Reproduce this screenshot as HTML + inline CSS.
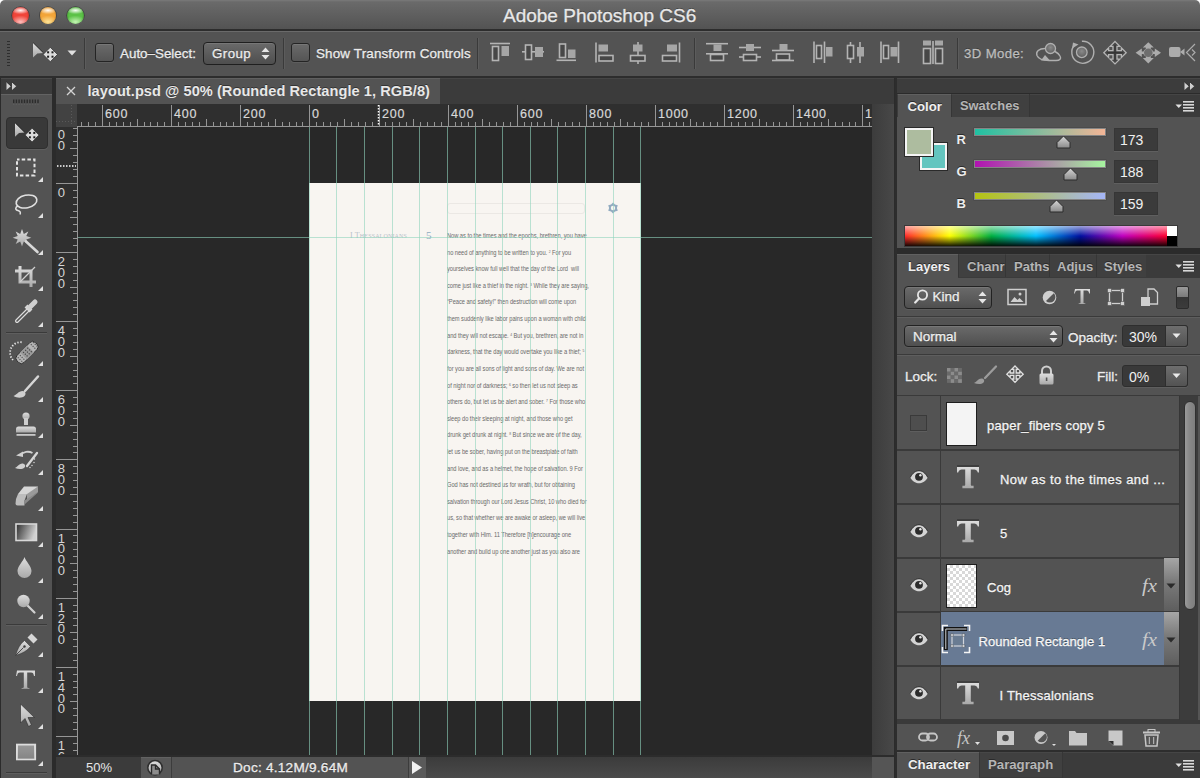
<!DOCTYPE html><html><head><meta charset="utf-8"><title>Photoshop</title><style>
*{margin:0;padding:0;box-sizing:border-box}
html,body{width:1200px;height:778px;overflow:hidden;background:#2b2b2b;font-family:"Liberation Sans",sans-serif}
.a{position:absolute}
.t{white-space:nowrap;line-height:1}
.s{-webkit-text-stroke:0.3px currentColor}
</style></head><body>
<div class="a" style="left:0px;top:0px;width:6px;height:6px;background:#fff"></div>
<div class="a" style="left:1194px;top:0px;width:6px;height:6px;background:#fff"></div>
<div class="a" style="left:0px;top:0px;width:1200px;height:29px;background:linear-gradient(#7a7a7a 0,#6a6a6a 2px,#535353 100%);border-radius:5px 5px 0 0"></div>
<div class="a" style="left:0px;top:29px;width:1200px;height:2px;background:#2d2d2d"></div>
<div class="a" style="left:11.9px;top:7.3px;width:16.8px;height:16.8px;border-radius:50%;background:radial-gradient(ellipse 55% 22% at 50% 20%,rgba(255,255,255,.95),rgba(255,255,255,0)),radial-gradient(ellipse 60% 38% at 50% 88%,rgba(255,215,215,.85),rgba(255,255,255,0)),radial-gradient(circle at 50% 50%,#f0453a 0%,#f0453a 55%,#8e1010 100%);box-shadow:0 0 0 0.7px rgba(30,30,30,.5),0 1px 0 rgba(255,255,255,.25)"></div>
<div class="a" style="left:39.5px;top:7.3px;width:16.8px;height:16.8px;border-radius:50%;background:radial-gradient(ellipse 55% 22% at 50% 20%,rgba(255,255,255,.95),rgba(255,255,255,0)),radial-gradient(ellipse 60% 38% at 50% 88%,rgba(255,240,170,.85),rgba(255,255,255,0)),radial-gradient(circle at 50% 50%,#f2a53a 0%,#f2a53a 55%,#9a5a05 100%);box-shadow:0 0 0 0.7px rgba(30,30,30,.5),0 1px 0 rgba(255,255,255,.25)"></div>
<div class="a" style="left:67.0px;top:7.3px;width:16.8px;height:16.8px;border-radius:50%;background:radial-gradient(ellipse 55% 22% at 50% 20%,rgba(255,255,255,.95),rgba(255,255,255,0)),radial-gradient(ellipse 60% 38% at 50% 88%,rgba(215,255,200,.85),rgba(255,255,255,0)),radial-gradient(circle at 50% 50%,#5cc248 0%,#5cc248 55%,#1e6a10 100%);box-shadow:0 0 0 0.7px rgba(30,30,30,.5),0 1px 0 rgba(255,255,255,.25)"></div>
<div class="a t s" style="left:503px;top:6px;font-size:19px;color:#e8e8e8;text-shadow:0 -1px 0 #3a3a3a;-webkit-text-stroke:0.3px #e8e8e8">Adobe Photoshop CS6</div>
<div class="a" style="left:0px;top:31px;width:1200px;height:45px;background:#535353;border-top:1px solid #6a6a6a"></div>
<div class="a" style="left:0px;top:76px;width:1200px;height:2px;background:#2d2d2d"></div>
<div class="a" style="left:7px;top:41px;width:3px;height:26px;background:repeating-linear-gradient(#2e2e2e 0 1px,transparent 1px 3px)"></div>
<svg class="a" style="left:30px;top:40px;" width="30" height="26" viewBox="0 0 30 26"><path d="M3 2.5 L3 17.5 L7.3 13.6 L13.5 12.9Z" fill="url(#tg)"/><path d="M3 2.5 L13.5 12.9" stroke="#1e1e1e" stroke-width="0.9"/><path d="M20.3 7.3 L27.5 14.5 L20.3 21.7 L13.100000000000001 14.5Z" fill="#dcdcdc" stroke="#2a2a2a" stroke-width="0.7"/><rect x="17.1" y="11.3" width="2" height="2" fill="#1e1e1e"/><rect x="17.1" y="15.7" width="2" height="2" fill="#1e1e1e"/><rect x="21.5" y="11.3" width="2" height="2" fill="#1e1e1e"/><rect x="21.5" y="15.7" width="2" height="2" fill="#1e1e1e"/></svg>
<svg class="a" style="left:67px;top:50px;" width="10" height="6" viewBox="0 0 10 6"><path d="M0.5 0.5 H9.5 L5 5.5 Z" fill="#e0e0e0"/></svg>
<div class="a" style="left:84px;top:38px;width:1px;height:31px;background:#3a3a3a;box-shadow:1px 0 0 #5c5c5c"></div>
<div class="a" style="left:283px;top:38px;width:1px;height:31px;background:#3a3a3a;box-shadow:1px 0 0 #5c5c5c"></div>
<div class="a" style="left:477px;top:38px;width:1px;height:31px;background:#3a3a3a;box-shadow:1px 0 0 #5c5c5c"></div>
<div class="a" style="left:694px;top:38px;width:1px;height:31px;background:#3a3a3a;box-shadow:1px 0 0 #5c5c5c"></div>
<div class="a" style="left:957px;top:38px;width:1px;height:31px;background:#3a3a3a;box-shadow:1px 0 0 #5c5c5c"></div>
<div class="a" style="left:95px;top:43px;width:19px;height:19px;border:1px solid #242424;border-radius:3px;background:linear-gradient(#6a6a6a,#555);box-shadow:inset 0 1px 0 #777, 0 1px 0 #5e5e5e"></div>
<div class="a t s" style="left:120px;top:47px;font-size:13.4px;letter-spacing:0px;color:#ececec;text-shadow:0 -1px 0 #333">Auto&ndash;Select:</div>
<div class="a" style="left:203px;top:42px;width:73px;height:23px;border:1px solid #1f1f1f;border-radius:4px;background:linear-gradient(#6a6a6a,#4e4e4e);box-shadow:inset 0 1px 0 #777"></div>
<div class="a t s" style="left:212px;top:47px;font-size:13.3px;letter-spacing:0.45px;color:#ececec;text-shadow:0 -1px 0 #333">Group</div>
<svg class="a" style="left:261px;top:47px;" width="9" height="13" viewBox="0 0 9 13"><path d="M0.5 5 L4.5 0.5 L8.5 5 Z M0.5 8 L4.5 12.5 L8.5 8 Z" fill="#e6e6e6"/></svg>
<div class="a" style="left:291px;top:43px;width:19px;height:19px;border:1px solid #242424;border-radius:3px;background:linear-gradient(#6a6a6a,#555);box-shadow:inset 0 1px 0 #777, 0 1px 0 #5e5e5e"></div>
<div class="a t s" style="left:316px;top:47px;font-size:13.45px;letter-spacing:0.14px;color:#ececec;text-shadow:0 -1px 0 #333">Show Transform Controls</div>
<svg class="a" style="left:0px;top:0px;" width="1200" height="80" viewBox="0 0 1200 80"><line x1="490" y1="43.5" x2="510" y2="43.5" stroke="#b4b4b4" stroke-width="1.6"/><rect x="492.5" y="46.5" width="6" height="14" fill="#474747" stroke="#b4b4b4" stroke-width="1.6"/><rect x="501.5" y="46" width="7.5" height="10" fill="#a6a6a6"/><line x1="522" y1="51.8" x2="544" y2="51.8" stroke="#b4b4b4" stroke-width="1.6"/><rect x="525.5" y="45.0" width="6" height="14.5" fill="#474747" stroke="#b4b4b4" stroke-width="1.6"/><rect x="535" y="47" width="8" height="10" fill="#a6a6a6"/><line x1="556.5" y1="60.3" x2="576" y2="60.3" stroke="#b4b4b4" stroke-width="1.6"/><rect x="559.5" y="44.0" width="6" height="13.5" fill="#474747" stroke="#b4b4b4" stroke-width="1.6"/><rect x="568" y="49.5" width="7.5" height="8.5" fill="#a6a6a6"/><line x1="596" y1="42.5" x2="596" y2="62.5" stroke="#b4b4b4" stroke-width="1.6"/><rect x="598.5" y="44.5" width="9.5" height="7" fill="#a6a6a6"/><rect x="599.0" y="55.5" width="14" height="5.5" fill="#474747" stroke="#b4b4b4" stroke-width="1.6"/><line x1="638" y1="42" x2="638" y2="64" stroke="#b4b4b4" stroke-width="1.6"/><rect x="633" y="44.5" width="9.5" height="7" fill="#a6a6a6"/><rect x="630.5" y="55.5" width="14.5" height="5.5" fill="#474747" stroke="#b4b4b4" stroke-width="1.6"/><line x1="679.5" y1="42.5" x2="679.5" y2="62.5" stroke="#b4b4b4" stroke-width="1.6"/><rect x="667" y="44.5" width="10" height="7" fill="#a6a6a6"/><rect x="662.5" y="55.5" width="14" height="5.5" fill="#474747" stroke="#b4b4b4" stroke-width="1.6"/><line x1="706" y1="43.7" x2="728" y2="43.7" stroke="#b4b4b4" stroke-width="1.6"/><rect x="713.5" y="44.5" width="8" height="6.5" fill="#a6a6a6"/><line x1="706" y1="53.8" x2="728" y2="53.8" stroke="#b4b4b4" stroke-width="1.6"/><rect x="710.5" y="54.5" width="13" height="6" fill="#474747" stroke="#b4b4b4" stroke-width="1.6"/><line x1="739" y1="47.5" x2="761" y2="47.5" stroke="#b4b4b4" stroke-width="1.6"/><rect x="746" y="44" width="8" height="7" fill="#a6a6a6"/><line x1="739" y1="57" x2="761" y2="57" stroke="#b4b4b4" stroke-width="1.6"/><rect x="743.5" y="54.5" width="13" height="6" fill="#474747" stroke="#b4b4b4" stroke-width="1.6"/><line x1="772" y1="50.5" x2="794" y2="50.5" stroke="#b4b4b4" stroke-width="1.6"/><rect x="779.5" y="44" width="8" height="6.5" fill="#a6a6a6"/><line x1="772" y1="60.5" x2="794" y2="60.5" stroke="#b4b4b4" stroke-width="1.6"/><rect x="776.5" y="54.0" width="13" height="6" fill="#474747" stroke="#b4b4b4" stroke-width="1.6"/><line x1="814" y1="41.5" x2="814" y2="63" stroke="#b4b4b4" stroke-width="1.6"/><rect x="816.5" y="45.5" width="5" height="13" fill="#474747" stroke="#b4b4b4" stroke-width="1.6"/><line x1="824.5" y1="41.5" x2="824.5" y2="63" stroke="#b4b4b4" stroke-width="1.6"/><rect x="826" y="47" width="6.5" height="9.5" fill="#a6a6a6"/><line x1="850.5" y1="42" x2="850.5" y2="63" stroke="#b4b4b4" stroke-width="1.6"/><rect x="847.5" y="45.5" width="6" height="13" fill="#474747" stroke="#b4b4b4" stroke-width="1.6"/><line x1="860" y1="42" x2="860" y2="63" stroke="#b4b4b4" stroke-width="1.6"/><rect x="857" y="47" width="7" height="9.5" fill="#a6a6a6"/><line x1="881" y1="41.5" x2="881" y2="63" stroke="#b4b4b4" stroke-width="1.6"/><rect x="883.5" y="45.5" width="5" height="13" fill="#474747" stroke="#b4b4b4" stroke-width="1.6"/><line x1="898.5" y1="41.5" x2="898.5" y2="63" stroke="#b4b4b4" stroke-width="1.6"/><rect x="890.5" y="47" width="7" height="9.5" fill="#a6a6a6"/><rect x="923" y="40.5" width="8" height="5" fill="#a6a6a6"/><rect x="923.5" y="48.5" width="7" height="15" fill="#474747" stroke="#b4b4b4" stroke-width="1.6"/><line x1="933" y1="41" x2="933" y2="64" stroke="#b4b4b4" stroke-width="1.6"/><rect x="935" y="40.5" width="8" height="5" fill="#a6a6a6"/><rect x="935.5" y="48.5" width="7" height="15" fill="#474747" stroke="#b4b4b4" stroke-width="1.6"/></svg>
<div class="a t s" style="left:964px;top:47px;font-size:13.15px;letter-spacing:0.4px;color:#bdbdbd;text-shadow:0 -1px 0 #333">3D Mode:</div>
<svg class="a" style="left:0px;top:0px;" width="1200" height="80" viewBox="0 0 1200 80"><defs><radialGradient id="sg" cx="0.5" cy="0.4" r="0.6"><stop offset="0" stop-color="#8a8a8a"/><stop offset="1" stop-color="#5e5e5e"/></radialGradient></defs><path d="M1045 48.5 c-6 0 -9.5 3 -8 7 c1.5 3.5 7 5 12 5 h7 c4 0 5.5 -2 4 -4.5 c-1 -2 -3 -3.5 -5 -4.5" fill="none" stroke="#b0b0b0" stroke-width="1.4"/><circle cx="1050.5" cy="48.5" r="5" fill="url(#sg)" stroke="#b0b0b0" stroke-width="1.3"/><path d="M1041 60.5 l4 -5.5 l5 5.5z" fill="#b0b0b0"/><path d="M1075 44.5 a11 11 0 1 0 6.9 -3.2" fill="none" stroke="#b0b0b0" stroke-width="1.4"/><path d="M1072 48.5 l1 -6 l5.5 2z" fill="#b0b0b0"/><circle cx="1081.8" cy="52.3" r="5.3" fill="url(#sg)" stroke="#b0b0b0" stroke-width="1.3"/><path d="M1115 41.5 l4.8 4.8 h-2.8 v4.4 h4.4 v-2.8 l4.8 4.8 -4.8 4.8 v-2.8 h-4.4 v4.4 h2.8 l-4.8 4.8 -4.8 -4.8 h2.8 v-4.4 h-4.4 v2.8 l-4.8 -4.8 4.8 -4.8 v2.8 h4.4 v-4.4 h-2.8z" fill="#474747" stroke="#b4b4b4" stroke-width="1.3"/><path d="M1115 45 v15.5 M1107.3 52.7 h15.5" stroke="#333" stroke-width="1"/><path d="M1148.3 42.3 l5.5 5.2 h-3 v1.6 a4.5 4.5 0 0 1 2.4 2.4 h1.6 v-3 l6.2 4.2 -6.2 4.2 v-3 h-1.6 a4.5 4.5 0 0 1 -2.4 2.4 v1.6 h3 l-5.5 5.5 -5.5 -5.5 h3 v-1.6 a4.5 4.5 0 0 1 -2.4 -2.4 h-1.6 v3 l-6.2 -4.2 6.2 -4.2 v3 h1.6 a4.5 4.5 0 0 1 2.4 -2.4 v-1.6 h-3z" fill="#acacac"/><circle cx="1148.3" cy="52.7" r="4.3" fill="#6e6e6e"/><rect x="1169" y="47" width="11.5" height="10" rx="2" fill="#acacac"/><path d="M1180 52 l4.5 -3.5 v7z" fill="#acacac"/><path d="M1195 44 l-8.5 8.5 8.5 8.5 M1192 49.5 l3 3 -3 3" fill="none" stroke="#acacac" stroke-width="1.2"/></svg>
<div class="a" style="left:1px;top:78px;width:51px;height:15.5px;background:#3c3c3c;border-top:1px solid #4a4a4a"></div>
<svg class="a" style="left:5.5px;top:80.5px;" width="12" height="10" viewBox="0 0 12 10"><path d="M0.5 1 L5 5 L0.5 9Z M6 1 L10.5 5 L6 9Z" fill="#cfcfcf"/><path d="M0.5 1 L5 5 M6 1 L10.5 5" stroke="#1e1e1e" stroke-width="0.8"/></svg>
<div class="a" style="left:1px;top:94px;width:51px;height:684px;background:#535353;border-top:1px solid #636363"></div>
<svg class="a" style="left:12px;top:98px;" width="30" height="8" viewBox="0 0 30 8"><rect x="1.0" y="1.5" width="1.4" height="4" fill="#2c2c2c"/><rect x="1.0" y="5.5" width="1.4" height="1" fill="#666"/><rect x="3.7" y="1.5" width="1.4" height="4" fill="#2c2c2c"/><rect x="3.7" y="5.5" width="1.4" height="1" fill="#666"/><rect x="6.4" y="1.5" width="1.4" height="4" fill="#2c2c2c"/><rect x="6.4" y="5.5" width="1.4" height="1" fill="#666"/><rect x="9.1" y="1.5" width="1.4" height="4" fill="#2c2c2c"/><rect x="9.1" y="5.5" width="1.4" height="1" fill="#666"/><rect x="11.8" y="1.5" width="1.4" height="4" fill="#2c2c2c"/><rect x="11.8" y="5.5" width="1.4" height="1" fill="#666"/><rect x="14.5" y="1.5" width="1.4" height="4" fill="#2c2c2c"/><rect x="14.5" y="5.5" width="1.4" height="1" fill="#666"/><rect x="17.2" y="1.5" width="1.4" height="4" fill="#2c2c2c"/><rect x="17.2" y="5.5" width="1.4" height="1" fill="#666"/><rect x="19.9" y="1.5" width="1.4" height="4" fill="#2c2c2c"/><rect x="19.9" y="5.5" width="1.4" height="1" fill="#666"/><rect x="22.6" y="1.5" width="1.4" height="4" fill="#2c2c2c"/><rect x="22.6" y="5.5" width="1.4" height="1" fill="#666"/><rect x="25.3" y="1.5" width="1.4" height="4" fill="#2c2c2c"/><rect x="25.3" y="5.5" width="1.4" height="1" fill="#666"/></svg>
<div class="a" style="left:6px;top:117px;width:42px;height:32px;background:#393939;border:1px solid #2f2f2f;border-radius:4px;box-shadow:0 1px 0 #5e5e5e"></div>
<div class="a" style="left:6px;top:332px;width:41px;height:1px;background:#3a3a3a;box-shadow:0 1px 0 #5e5e5e"></div>
<div class="a" style="left:6px;top:624px;width:41px;height:1px;background:#3a3a3a;box-shadow:0 1px 0 #5e5e5e"></div>
<div class="a" style="left:6px;top:772px;width:41px;height:1px;background:#3a3a3a;box-shadow:0 1px 0 #5e5e5e"></div>
<div class="a" style="left:56px;top:78px;width:838px;height:26px;background:#3b3b3b;border-top:1px solid #454545"></div>
<div class="a" style="left:56px;top:78px;width:384px;height:26px;background:#535353;border-top:1px solid #606060"></div>
<svg class="a" style="left:66px;top:86px;" width="10" height="10" viewBox="0 0 10 10"><path d="M1 1 L9 9 M9 1 L1 9" stroke="#d4d4d4" stroke-width="1.3"/></svg>
<div class="a t" style="left:87.5px;top:84px;font-size:14.6px;font-weight:bold;letter-spacing:0.05px;color:#e8e8e8;text-shadow:0 -1px 0 #333">layout.psd @ 50% (Rounded Rectangle 1, RGB/8)</div>
<div class="a" style="left:56px;top:104px;width:21px;height:23px;background:#424242"></div>
<div class="a" style="left:77px;top:104px;width:795px;height:23px;background:#2f2f2f"></div>
<div class="a" style="left:56px;top:127px;width:22px;height:628px;background:#2f2f2f"></div>
<div class="a" style="left:78px;top:127px;width:794px;height:628px;background:#282828"></div>
<div class="a" style="left:872px;top:104px;width:22px;height:651px;background:linear-gradient(90deg,#3c3c3c,#484848)"></div>
<div class="a" style="left:56px;top:755px;width:838px;height:23px;background:linear-gradient(#3a3a3a,#4a4a4a)"></div>
<div class="a" style="left:56px;top:755px;width:838px;height:2px;background:#2c2c2c"></div>
<div class="a" style="left:56px;top:757px;width:85px;height:21px;background:#3b3b3b"></div>
<div class="a" style="left:141px;top:757px;width:30px;height:21px;background:#575757;border-top:1px solid #626262"></div>
<div class="a" style="left:171px;top:757px;width:237px;height:21px;background:#535353;border-left:1px solid #3c3c3c"></div>
<div class="a t" style="left:86px;top:761px;font-size:13px;color:#e8e8e8">50%</div>
<div class="a t s" style="left:233px;top:761px;font-size:13.6px;letter-spacing:0.25px;color:#ececec;text-shadow:0 -1px 0 #333">Doc: 4.12M/9.64M</div>
<div class="a" style="left:408px;top:757px;width:18px;height:21px;background:#5a5a5a;border-left:1px solid #3c3c3c"></div>
<svg class="a" style="left:411px;top:760px;" width="12" height="15" viewBox="0 0 12 15"><path d="M1 1 L11 7.5 L1 14Z" fill="#f0f0f0"/></svg>
<div class="a" style="left:872px;top:757px;width:22px;height:21px;background:#555"></div>
<svg class="a" style="left:145px;top:757px;" width="22" height="21" viewBox="0 0 22 21"><circle cx="10" cy="10.7" r="7.2" fill="url(#tg)" stroke="#2e2e2e" stroke-width="1.5"/><path d="M6.5 17.5 v-9.5 h4 l4 4 v5.5" fill="#8c8c8c" stroke="#2a2a2a" stroke-width="1.4"/><path d="M10.5 8 v4 h4" fill="none" stroke="#2a2a2a" stroke-width="1.3"/></svg>
<div class="a" style="left:897px;top:78px;width:303px;height:15px;background:#3c3c3c;border-top:1px solid #474747"></div>
<svg class="a" style="left:1183.5px;top:80.5px;" width="12" height="10" viewBox="0 0 12 10"><path d="M0.5 1 L5 5 L0.5 9Z M6 1 L10.5 5 L6 9Z" fill="#cfcfcf"/><path d="M0.5 1 L5 5 M6 1 L10.5 5" stroke="#1e1e1e" stroke-width="0.8"/></svg>
<div class="a" style="left:897px;top:94px;width:303px;height:24px;background:#3b3b3b;border-top:1px solid #454545"></div>
<div class="a" style="left:897px;top:117px;width:303px;height:131px;background:#535353"></div>
<div class="a" style="left:897px;top:254px;width:303px;height:24px;background:#3b3b3b;border-top:1px solid #454545"></div>
<div class="a" style="left:897px;top:278px;width:303px;height:472px;background:#535353"></div>
<div class="a" style="left:897px;top:752px;width:303px;height:26px;background:#3b3b3b;border-top:1px solid #454545"></div>
<svg class="a" style="left:0px;top:0px;" width="900" height="778" viewBox="0 0 900 778"><line x1="81.5" y1="122" x2="81.5" y2="127" stroke="#969696" stroke-width="1"/><line x1="88.5" y1="122" x2="88.5" y2="127" stroke="#969696" stroke-width="1"/><line x1="95.5" y1="122" x2="95.5" y2="127" stroke="#969696" stroke-width="1"/><line x1="102.5" y1="105" x2="102.5" y2="127" stroke="#969696" stroke-width="1"/><line x1="109.5" y1="122" x2="109.5" y2="127" stroke="#969696" stroke-width="1"/><line x1="116.5" y1="122" x2="116.5" y2="127" stroke="#969696" stroke-width="1"/><line x1="123.5" y1="122" x2="123.5" y2="127" stroke="#969696" stroke-width="1"/><line x1="130.5" y1="122" x2="130.5" y2="127" stroke="#969696" stroke-width="1"/><line x1="137.5" y1="119" x2="137.5" y2="127" stroke="#969696" stroke-width="1"/><line x1="144.5" y1="122" x2="144.5" y2="127" stroke="#969696" stroke-width="1"/><line x1="150.5" y1="122" x2="150.5" y2="127" stroke="#969696" stroke-width="1"/><line x1="157.5" y1="122" x2="157.5" y2="127" stroke="#969696" stroke-width="1"/><line x1="164.5" y1="122" x2="164.5" y2="127" stroke="#969696" stroke-width="1"/><line x1="171.5" y1="105" x2="171.5" y2="127" stroke="#969696" stroke-width="1"/><line x1="178.5" y1="122" x2="178.5" y2="127" stroke="#969696" stroke-width="1"/><line x1="185.5" y1="122" x2="185.5" y2="127" stroke="#969696" stroke-width="1"/><line x1="192.5" y1="122" x2="192.5" y2="127" stroke="#969696" stroke-width="1"/><line x1="199.5" y1="122" x2="199.5" y2="127" stroke="#969696" stroke-width="1"/><line x1="206.5" y1="119" x2="206.5" y2="127" stroke="#969696" stroke-width="1"/><line x1="213.5" y1="122" x2="213.5" y2="127" stroke="#969696" stroke-width="1"/><line x1="220.5" y1="122" x2="220.5" y2="127" stroke="#969696" stroke-width="1"/><line x1="226.5" y1="122" x2="226.5" y2="127" stroke="#969696" stroke-width="1"/><line x1="233.5" y1="122" x2="233.5" y2="127" stroke="#969696" stroke-width="1"/><line x1="240.5" y1="105" x2="240.5" y2="127" stroke="#969696" stroke-width="1"/><line x1="247.5" y1="122" x2="247.5" y2="127" stroke="#969696" stroke-width="1"/><line x1="254.5" y1="122" x2="254.5" y2="127" stroke="#969696" stroke-width="1"/><line x1="261.5" y1="122" x2="261.5" y2="127" stroke="#969696" stroke-width="1"/><line x1="268.5" y1="122" x2="268.5" y2="127" stroke="#969696" stroke-width="1"/><line x1="275.5" y1="119" x2="275.5" y2="127" stroke="#969696" stroke-width="1"/><line x1="282.5" y1="122" x2="282.5" y2="127" stroke="#969696" stroke-width="1"/><line x1="289.5" y1="122" x2="289.5" y2="127" stroke="#969696" stroke-width="1"/><line x1="296.5" y1="122" x2="296.5" y2="127" stroke="#969696" stroke-width="1"/><line x1="302.5" y1="122" x2="302.5" y2="127" stroke="#969696" stroke-width="1"/><line x1="309.5" y1="105" x2="309.5" y2="127" stroke="#969696" stroke-width="1"/><line x1="316.5" y1="122" x2="316.5" y2="127" stroke="#969696" stroke-width="1"/><line x1="323.5" y1="122" x2="323.5" y2="127" stroke="#969696" stroke-width="1"/><line x1="330.5" y1="122" x2="330.5" y2="127" stroke="#969696" stroke-width="1"/><line x1="337.5" y1="122" x2="337.5" y2="127" stroke="#969696" stroke-width="1"/><line x1="344.5" y1="119" x2="344.5" y2="127" stroke="#969696" stroke-width="1"/><line x1="351.5" y1="122" x2="351.5" y2="127" stroke="#969696" stroke-width="1"/><line x1="358.5" y1="122" x2="358.5" y2="127" stroke="#969696" stroke-width="1"/><line x1="365.5" y1="122" x2="365.5" y2="127" stroke="#969696" stroke-width="1"/><line x1="372.5" y1="122" x2="372.5" y2="127" stroke="#969696" stroke-width="1"/><line x1="379.5" y1="105" x2="379.5" y2="127" stroke="#969696" stroke-width="1"/><line x1="385.5" y1="122" x2="385.5" y2="127" stroke="#969696" stroke-width="1"/><line x1="392.5" y1="122" x2="392.5" y2="127" stroke="#969696" stroke-width="1"/><line x1="399.5" y1="122" x2="399.5" y2="127" stroke="#969696" stroke-width="1"/><line x1="406.5" y1="122" x2="406.5" y2="127" stroke="#969696" stroke-width="1"/><line x1="413.5" y1="119" x2="413.5" y2="127" stroke="#969696" stroke-width="1"/><line x1="420.5" y1="122" x2="420.5" y2="127" stroke="#969696" stroke-width="1"/><line x1="427.5" y1="122" x2="427.5" y2="127" stroke="#969696" stroke-width="1"/><line x1="434.5" y1="122" x2="434.5" y2="127" stroke="#969696" stroke-width="1"/><line x1="441.5" y1="122" x2="441.5" y2="127" stroke="#969696" stroke-width="1"/><line x1="448.5" y1="105" x2="448.5" y2="127" stroke="#969696" stroke-width="1"/><line x1="455.5" y1="122" x2="455.5" y2="127" stroke="#969696" stroke-width="1"/><line x1="461.5" y1="122" x2="461.5" y2="127" stroke="#969696" stroke-width="1"/><line x1="468.5" y1="122" x2="468.5" y2="127" stroke="#969696" stroke-width="1"/><line x1="475.5" y1="122" x2="475.5" y2="127" stroke="#969696" stroke-width="1"/><line x1="482.5" y1="119" x2="482.5" y2="127" stroke="#969696" stroke-width="1"/><line x1="489.5" y1="122" x2="489.5" y2="127" stroke="#969696" stroke-width="1"/><line x1="496.5" y1="122" x2="496.5" y2="127" stroke="#969696" stroke-width="1"/><line x1="503.5" y1="122" x2="503.5" y2="127" stroke="#969696" stroke-width="1"/><line x1="510.5" y1="122" x2="510.5" y2="127" stroke="#969696" stroke-width="1"/><line x1="517.5" y1="105" x2="517.5" y2="127" stroke="#969696" stroke-width="1"/><line x1="524.5" y1="122" x2="524.5" y2="127" stroke="#969696" stroke-width="1"/><line x1="531.5" y1="122" x2="531.5" y2="127" stroke="#969696" stroke-width="1"/><line x1="537.5" y1="122" x2="537.5" y2="127" stroke="#969696" stroke-width="1"/><line x1="544.5" y1="122" x2="544.5" y2="127" stroke="#969696" stroke-width="1"/><line x1="551.5" y1="119" x2="551.5" y2="127" stroke="#969696" stroke-width="1"/><line x1="558.5" y1="122" x2="558.5" y2="127" stroke="#969696" stroke-width="1"/><line x1="565.5" y1="122" x2="565.5" y2="127" stroke="#969696" stroke-width="1"/><line x1="572.5" y1="122" x2="572.5" y2="127" stroke="#969696" stroke-width="1"/><line x1="579.5" y1="122" x2="579.5" y2="127" stroke="#969696" stroke-width="1"/><line x1="586.5" y1="105" x2="586.5" y2="127" stroke="#969696" stroke-width="1"/><line x1="593.5" y1="122" x2="593.5" y2="127" stroke="#969696" stroke-width="1"/><line x1="600.5" y1="122" x2="600.5" y2="127" stroke="#969696" stroke-width="1"/><line x1="607.5" y1="122" x2="607.5" y2="127" stroke="#969696" stroke-width="1"/><line x1="614.5" y1="122" x2="614.5" y2="127" stroke="#969696" stroke-width="1"/><line x1="620.5" y1="119" x2="620.5" y2="127" stroke="#969696" stroke-width="1"/><line x1="627.5" y1="122" x2="627.5" y2="127" stroke="#969696" stroke-width="1"/><line x1="634.5" y1="122" x2="634.5" y2="127" stroke="#969696" stroke-width="1"/><line x1="641.5" y1="122" x2="641.5" y2="127" stroke="#969696" stroke-width="1"/><line x1="648.5" y1="122" x2="648.5" y2="127" stroke="#969696" stroke-width="1"/><line x1="655.5" y1="105" x2="655.5" y2="127" stroke="#969696" stroke-width="1"/><line x1="662.5" y1="122" x2="662.5" y2="127" stroke="#969696" stroke-width="1"/><line x1="669.5" y1="122" x2="669.5" y2="127" stroke="#969696" stroke-width="1"/><line x1="676.5" y1="122" x2="676.5" y2="127" stroke="#969696" stroke-width="1"/><line x1="683.5" y1="122" x2="683.5" y2="127" stroke="#969696" stroke-width="1"/><line x1="690.5" y1="119" x2="690.5" y2="127" stroke="#969696" stroke-width="1"/><line x1="696.5" y1="122" x2="696.5" y2="127" stroke="#969696" stroke-width="1"/><line x1="703.5" y1="122" x2="703.5" y2="127" stroke="#969696" stroke-width="1"/><line x1="710.5" y1="122" x2="710.5" y2="127" stroke="#969696" stroke-width="1"/><line x1="717.5" y1="122" x2="717.5" y2="127" stroke="#969696" stroke-width="1"/><line x1="724.5" y1="105" x2="724.5" y2="127" stroke="#969696" stroke-width="1"/><line x1="731.5" y1="122" x2="731.5" y2="127" stroke="#969696" stroke-width="1"/><line x1="738.5" y1="122" x2="738.5" y2="127" stroke="#969696" stroke-width="1"/><line x1="745.5" y1="122" x2="745.5" y2="127" stroke="#969696" stroke-width="1"/><line x1="752.5" y1="122" x2="752.5" y2="127" stroke="#969696" stroke-width="1"/><line x1="759.5" y1="119" x2="759.5" y2="127" stroke="#969696" stroke-width="1"/><line x1="766.5" y1="122" x2="766.5" y2="127" stroke="#969696" stroke-width="1"/><line x1="773.5" y1="122" x2="773.5" y2="127" stroke="#969696" stroke-width="1"/><line x1="779.5" y1="122" x2="779.5" y2="127" stroke="#969696" stroke-width="1"/><line x1="786.5" y1="122" x2="786.5" y2="127" stroke="#969696" stroke-width="1"/><line x1="793.5" y1="105" x2="793.5" y2="127" stroke="#969696" stroke-width="1"/><line x1="800.5" y1="122" x2="800.5" y2="127" stroke="#969696" stroke-width="1"/><line x1="807.5" y1="122" x2="807.5" y2="127" stroke="#969696" stroke-width="1"/><line x1="814.5" y1="122" x2="814.5" y2="127" stroke="#969696" stroke-width="1"/><line x1="821.5" y1="122" x2="821.5" y2="127" stroke="#969696" stroke-width="1"/><line x1="828.5" y1="119" x2="828.5" y2="127" stroke="#969696" stroke-width="1"/><line x1="835.5" y1="122" x2="835.5" y2="127" stroke="#969696" stroke-width="1"/><line x1="842.5" y1="122" x2="842.5" y2="127" stroke="#969696" stroke-width="1"/><line x1="849.5" y1="122" x2="849.5" y2="127" stroke="#969696" stroke-width="1"/><line x1="855.5" y1="122" x2="855.5" y2="127" stroke="#969696" stroke-width="1"/><line x1="862.5" y1="105" x2="862.5" y2="127" stroke="#969696" stroke-width="1"/><line x1="869.5" y1="122" x2="869.5" y2="127" stroke="#969696" stroke-width="1"/><line x1="77" y1="126.5" x2="872" y2="126.5" stroke="#969696" stroke-width="1"/><line x1="73" y1="128.5" x2="78" y2="128.5" stroke="#969696" stroke-width="1"/><line x1="73" y1="135.5" x2="78" y2="135.5" stroke="#969696" stroke-width="1"/><line x1="73" y1="141.5" x2="78" y2="141.5" stroke="#969696" stroke-width="1"/><line x1="70" y1="148.5" x2="78" y2="148.5" stroke="#969696" stroke-width="1"/><line x1="73" y1="155.5" x2="78" y2="155.5" stroke="#969696" stroke-width="1"/><line x1="73" y1="162.5" x2="78" y2="162.5" stroke="#969696" stroke-width="1"/><line x1="73" y1="169.5" x2="78" y2="169.5" stroke="#969696" stroke-width="1"/><line x1="73" y1="176.5" x2="78" y2="176.5" stroke="#969696" stroke-width="1"/><line x1="56" y1="183.5" x2="78" y2="183.5" stroke="#969696" stroke-width="1"/><line x1="73" y1="190.5" x2="78" y2="190.5" stroke="#969696" stroke-width="1"/><line x1="73" y1="197.5" x2="78" y2="197.5" stroke="#969696" stroke-width="1"/><line x1="73" y1="204.5" x2="78" y2="204.5" stroke="#969696" stroke-width="1"/><line x1="73" y1="211.5" x2="78" y2="211.5" stroke="#969696" stroke-width="1"/><line x1="70" y1="217.5" x2="78" y2="217.5" stroke="#969696" stroke-width="1"/><line x1="73" y1="224.5" x2="78" y2="224.5" stroke="#969696" stroke-width="1"/><line x1="73" y1="231.5" x2="78" y2="231.5" stroke="#969696" stroke-width="1"/><line x1="73" y1="238.5" x2="78" y2="238.5" stroke="#969696" stroke-width="1"/><line x1="73" y1="245.5" x2="78" y2="245.5" stroke="#969696" stroke-width="1"/><line x1="56" y1="252.5" x2="78" y2="252.5" stroke="#969696" stroke-width="1"/><line x1="73" y1="259.5" x2="78" y2="259.5" stroke="#969696" stroke-width="1"/><line x1="73" y1="266.5" x2="78" y2="266.5" stroke="#969696" stroke-width="1"/><line x1="73" y1="273.5" x2="78" y2="273.5" stroke="#969696" stroke-width="1"/><line x1="73" y1="280.5" x2="78" y2="280.5" stroke="#969696" stroke-width="1"/><line x1="70" y1="287.5" x2="78" y2="287.5" stroke="#969696" stroke-width="1"/><line x1="73" y1="293.5" x2="78" y2="293.5" stroke="#969696" stroke-width="1"/><line x1="73" y1="300.5" x2="78" y2="300.5" stroke="#969696" stroke-width="1"/><line x1="73" y1="307.5" x2="78" y2="307.5" stroke="#969696" stroke-width="1"/><line x1="73" y1="314.5" x2="78" y2="314.5" stroke="#969696" stroke-width="1"/><line x1="56" y1="321.5" x2="78" y2="321.5" stroke="#969696" stroke-width="1"/><line x1="73" y1="328.5" x2="78" y2="328.5" stroke="#969696" stroke-width="1"/><line x1="73" y1="335.5" x2="78" y2="335.5" stroke="#969696" stroke-width="1"/><line x1="73" y1="342.5" x2="78" y2="342.5" stroke="#969696" stroke-width="1"/><line x1="73" y1="349.5" x2="78" y2="349.5" stroke="#969696" stroke-width="1"/><line x1="70" y1="356.5" x2="78" y2="356.5" stroke="#969696" stroke-width="1"/><line x1="73" y1="363.5" x2="78" y2="363.5" stroke="#969696" stroke-width="1"/><line x1="73" y1="370.5" x2="78" y2="370.5" stroke="#969696" stroke-width="1"/><line x1="73" y1="376.5" x2="78" y2="376.5" stroke="#969696" stroke-width="1"/><line x1="73" y1="383.5" x2="78" y2="383.5" stroke="#969696" stroke-width="1"/><line x1="56" y1="390.5" x2="78" y2="390.5" stroke="#969696" stroke-width="1"/><line x1="73" y1="397.5" x2="78" y2="397.5" stroke="#969696" stroke-width="1"/><line x1="73" y1="404.5" x2="78" y2="404.5" stroke="#969696" stroke-width="1"/><line x1="73" y1="411.5" x2="78" y2="411.5" stroke="#969696" stroke-width="1"/><line x1="73" y1="418.5" x2="78" y2="418.5" stroke="#969696" stroke-width="1"/><line x1="70" y1="425.5" x2="78" y2="425.5" stroke="#969696" stroke-width="1"/><line x1="73" y1="432.5" x2="78" y2="432.5" stroke="#969696" stroke-width="1"/><line x1="73" y1="439.5" x2="78" y2="439.5" stroke="#969696" stroke-width="1"/><line x1="73" y1="446.5" x2="78" y2="446.5" stroke="#969696" stroke-width="1"/><line x1="73" y1="452.5" x2="78" y2="452.5" stroke="#969696" stroke-width="1"/><line x1="56" y1="459.5" x2="78" y2="459.5" stroke="#969696" stroke-width="1"/><line x1="73" y1="466.5" x2="78" y2="466.5" stroke="#969696" stroke-width="1"/><line x1="73" y1="473.5" x2="78" y2="473.5" stroke="#969696" stroke-width="1"/><line x1="73" y1="480.5" x2="78" y2="480.5" stroke="#969696" stroke-width="1"/><line x1="73" y1="487.5" x2="78" y2="487.5" stroke="#969696" stroke-width="1"/><line x1="70" y1="494.5" x2="78" y2="494.5" stroke="#969696" stroke-width="1"/><line x1="73" y1="501.5" x2="78" y2="501.5" stroke="#969696" stroke-width="1"/><line x1="73" y1="508.5" x2="78" y2="508.5" stroke="#969696" stroke-width="1"/><line x1="73" y1="515.5" x2="78" y2="515.5" stroke="#969696" stroke-width="1"/><line x1="73" y1="522.5" x2="78" y2="522.5" stroke="#969696" stroke-width="1"/><line x1="56" y1="529.5" x2="78" y2="529.5" stroke="#969696" stroke-width="1"/><line x1="73" y1="535.5" x2="78" y2="535.5" stroke="#969696" stroke-width="1"/><line x1="73" y1="542.5" x2="78" y2="542.5" stroke="#969696" stroke-width="1"/><line x1="73" y1="549.5" x2="78" y2="549.5" stroke="#969696" stroke-width="1"/><line x1="73" y1="556.5" x2="78" y2="556.5" stroke="#969696" stroke-width="1"/><line x1="70" y1="563.5" x2="78" y2="563.5" stroke="#969696" stroke-width="1"/><line x1="73" y1="570.5" x2="78" y2="570.5" stroke="#969696" stroke-width="1"/><line x1="73" y1="577.5" x2="78" y2="577.5" stroke="#969696" stroke-width="1"/><line x1="73" y1="584.5" x2="78" y2="584.5" stroke="#969696" stroke-width="1"/><line x1="73" y1="591.5" x2="78" y2="591.5" stroke="#969696" stroke-width="1"/><line x1="56" y1="598.5" x2="78" y2="598.5" stroke="#969696" stroke-width="1"/><line x1="73" y1="605.5" x2="78" y2="605.5" stroke="#969696" stroke-width="1"/><line x1="73" y1="611.5" x2="78" y2="611.5" stroke="#969696" stroke-width="1"/><line x1="73" y1="618.5" x2="78" y2="618.5" stroke="#969696" stroke-width="1"/><line x1="73" y1="625.5" x2="78" y2="625.5" stroke="#969696" stroke-width="1"/><line x1="70" y1="632.5" x2="78" y2="632.5" stroke="#969696" stroke-width="1"/><line x1="73" y1="639.5" x2="78" y2="639.5" stroke="#969696" stroke-width="1"/><line x1="73" y1="646.5" x2="78" y2="646.5" stroke="#969696" stroke-width="1"/><line x1="73" y1="653.5" x2="78" y2="653.5" stroke="#969696" stroke-width="1"/><line x1="73" y1="660.5" x2="78" y2="660.5" stroke="#969696" stroke-width="1"/><line x1="56" y1="667.5" x2="78" y2="667.5" stroke="#969696" stroke-width="1"/><line x1="73" y1="674.5" x2="78" y2="674.5" stroke="#969696" stroke-width="1"/><line x1="73" y1="681.5" x2="78" y2="681.5" stroke="#969696" stroke-width="1"/><line x1="73" y1="687.5" x2="78" y2="687.5" stroke="#969696" stroke-width="1"/><line x1="73" y1="694.5" x2="78" y2="694.5" stroke="#969696" stroke-width="1"/><line x1="70" y1="701.5" x2="78" y2="701.5" stroke="#969696" stroke-width="1"/><line x1="73" y1="708.5" x2="78" y2="708.5" stroke="#969696" stroke-width="1"/><line x1="73" y1="715.5" x2="78" y2="715.5" stroke="#969696" stroke-width="1"/><line x1="73" y1="722.5" x2="78" y2="722.5" stroke="#969696" stroke-width="1"/><line x1="73" y1="729.5" x2="78" y2="729.5" stroke="#969696" stroke-width="1"/><line x1="56" y1="736.5" x2="78" y2="736.5" stroke="#969696" stroke-width="1"/><line x1="73" y1="743.5" x2="78" y2="743.5" stroke="#969696" stroke-width="1"/><line x1="73" y1="750.5" x2="78" y2="750.5" stroke="#969696" stroke-width="1"/><line x1="77.5" y1="127" x2="77.5" y2="755" stroke="#969696" stroke-width="1"/><line x1="378.5" y1="105" x2="378.5" y2="126" stroke="#fff" stroke-width="1.5" stroke-dasharray="1.5 1.5"/><line x1="57" y1="166" x2="76" y2="166" stroke="#fff" stroke-width="1.5" stroke-dasharray="1.5 1.5"/><line x1="71.5" y1="105" x2="71.5" y2="126" stroke="#5a5a5a" stroke-width="1" stroke-dasharray="1 2"/><line x1="56" y1="121.5" x2="77" y2="121.5" stroke="#5a5a5a" stroke-width="1" stroke-dasharray="1 2"/></svg>
<div class="a t" style="left:105px;top:107.5px;font-size:12.5px;color:#d8d8d8;letter-spacing:0.75px;-webkit-text-stroke:0.2px #d8d8d8">600</div>
<div class="a t" style="left:174px;top:107.5px;font-size:12.5px;color:#d8d8d8;letter-spacing:0.75px;-webkit-text-stroke:0.2px #d8d8d8">400</div>
<div class="a t" style="left:243px;top:107.5px;font-size:12.5px;color:#d8d8d8;letter-spacing:0.75px;-webkit-text-stroke:0.2px #d8d8d8">200</div>
<div class="a t" style="left:312px;top:107.5px;font-size:12.5px;color:#d8d8d8;letter-spacing:0.75px;-webkit-text-stroke:0.2px #d8d8d8">0</div>
<div class="a t" style="left:382px;top:107.5px;font-size:12.5px;color:#d8d8d8;letter-spacing:0.75px;-webkit-text-stroke:0.2px #d8d8d8">200</div>
<div class="a t" style="left:451px;top:107.5px;font-size:12.5px;color:#d8d8d8;letter-spacing:0.75px;-webkit-text-stroke:0.2px #d8d8d8">400</div>
<div class="a t" style="left:520px;top:107.5px;font-size:12.5px;color:#d8d8d8;letter-spacing:0.75px;-webkit-text-stroke:0.2px #d8d8d8">600</div>
<div class="a t" style="left:589px;top:107.5px;font-size:12.5px;color:#d8d8d8;letter-spacing:0.75px;-webkit-text-stroke:0.2px #d8d8d8">800</div>
<div class="a t" style="left:658px;top:107.5px;font-size:12.5px;color:#d8d8d8;letter-spacing:0.75px;-webkit-text-stroke:0.2px #d8d8d8">1000</div>
<div class="a t" style="left:727px;top:107.5px;font-size:12.5px;color:#d8d8d8;letter-spacing:0.75px;-webkit-text-stroke:0.2px #d8d8d8">1200</div>
<div class="a t" style="left:796px;top:107.5px;font-size:12.5px;color:#d8d8d8;letter-spacing:0.75px;-webkit-text-stroke:0.2px #d8d8d8">1400</div>
<div class="a t" style="left:865px;top:107.5px;font-size:12.5px;color:#d8d8d8;letter-spacing:0.75px;-webkit-text-stroke:0.2px #d8d8d8">1</div>
<div class="a" style="left:56px;top:127px;width:21px;height:628px;overflow:hidden"><div class="a" style="left:-56px;top:-127px;width:100px;height:800px"><div class="a t" style="left:57.8px;top:127.7px;font-size:13px;color:#d6d6d6">0</div><div class="a t" style="left:57.8px;top:138.6px;font-size:13px;color:#d6d6d6">0</div><div class="a t" style="left:57.8px;top:185.9px;font-size:13px;color:#d6d6d6">0</div><div class="a t" style="left:57.8px;top:255.0px;font-size:13px;color:#d6d6d6">2</div><div class="a t" style="left:57.8px;top:265.9px;font-size:13px;color:#d6d6d6">0</div><div class="a t" style="left:57.8px;top:276.8px;font-size:13px;color:#d6d6d6">0</div><div class="a t" style="left:57.8px;top:324.1px;font-size:13px;color:#d6d6d6">4</div><div class="a t" style="left:57.8px;top:335.0px;font-size:13px;color:#d6d6d6">0</div><div class="a t" style="left:57.8px;top:345.9px;font-size:13px;color:#d6d6d6">0</div><div class="a t" style="left:57.8px;top:393.3px;font-size:13px;color:#d6d6d6">6</div><div class="a t" style="left:57.8px;top:404.2px;font-size:13px;color:#d6d6d6">0</div><div class="a t" style="left:57.8px;top:415.1px;font-size:13px;color:#d6d6d6">0</div><div class="a t" style="left:57.8px;top:462.4px;font-size:13px;color:#d6d6d6">8</div><div class="a t" style="left:57.8px;top:473.3px;font-size:13px;color:#d6d6d6">0</div><div class="a t" style="left:57.8px;top:484.2px;font-size:13px;color:#d6d6d6">0</div><div class="a t" style="left:57.8px;top:531.5px;font-size:13px;color:#d6d6d6">1</div><div class="a t" style="left:57.8px;top:542.4px;font-size:13px;color:#d6d6d6">0</div><div class="a t" style="left:57.8px;top:553.3px;font-size:13px;color:#d6d6d6">0</div><div class="a t" style="left:57.8px;top:564.2px;font-size:13px;color:#d6d6d6">0</div><div class="a t" style="left:57.8px;top:600.6px;font-size:13px;color:#d6d6d6">1</div><div class="a t" style="left:57.8px;top:611.5px;font-size:13px;color:#d6d6d6">2</div><div class="a t" style="left:57.8px;top:622.4px;font-size:13px;color:#d6d6d6">0</div><div class="a t" style="left:57.8px;top:633.3px;font-size:13px;color:#d6d6d6">0</div><div class="a t" style="left:57.8px;top:669.7px;font-size:13px;color:#d6d6d6">1</div><div class="a t" style="left:57.8px;top:680.6px;font-size:13px;color:#d6d6d6">4</div><div class="a t" style="left:57.8px;top:691.5px;font-size:13px;color:#d6d6d6">0</div><div class="a t" style="left:57.8px;top:702.4px;font-size:13px;color:#d6d6d6">0</div><div class="a t" style="left:57.8px;top:738.9px;font-size:13px;color:#d6d6d6">1</div><div class="a t" style="left:57.8px;top:749.8px;font-size:13px;color:#d6d6d6">6</div></div></div>
<div class="a" style="left:309px;top:183px;width:332px;height:518px;background:#f8f5f1"></div>
<div class="a" style="left:447px;top:202.5px;width:138px;height:11px;border:1px solid #ebe8e4;border-radius:3px"></div>
<svg class="a" style="left:606px;top:201px;" width="14" height="14" viewBox="0 0 14 14"><polygon points="7.00,1.50 5.05,3.62 2.24,4.25 3.10,7.00 2.24,9.75 5.05,10.38 7.00,12.50 8.95,10.38 11.76,9.75 10.90,7.00 11.76,4.25 8.95,3.62" fill="#92abc0"/><circle cx="7" cy="7" r="2.2" fill="#f7f5f1"/></svg>
<div class="a t" style="left:350px;top:232px;font-size:8px;font-family:'Liberation Serif',serif;color:#b9c2c9;letter-spacing:0.15px">I T<span style="font-size:6px">HESSALONIANS</span></div>
<div class="a t" style="left:426px;top:230px;font-size:11px;font-family:'Liberation Serif',serif;color:#8fa9bf">5</div>
<div class="a" style="left:0;top:0;font-size:6.75px;color:#6a6a6a;letter-spacing:-0.05px"><div class="a t" style="left:447px;top:232.9px;transform:scaleX(0.848);transform-origin:0 0">Now as to the times and the epochs, brethren, you have</div><div class="a t" style="left:447px;top:249.5px;transform:scaleX(0.848);transform-origin:0 0">no need of anything to be written to you. <sup>2</sup> For you</div><div class="a t" style="left:447px;top:266.1px;transform:scaleX(0.848);transform-origin:0 0">yourselves know full well that the day of the Lord&nbsp; will</div><div class="a t" style="left:447px;top:282.8px;transform:scaleX(0.848);transform-origin:0 0">come just like a thief in the night. <sup>3</sup> While they are saying,</div><div class="a t" style="left:447px;top:299.4px;transform:scaleX(0.848);transform-origin:0 0">&ldquo;Peace and safety!&rdquo; then destruction will come upon</div><div class="a t" style="left:447px;top:316.0px;transform:scaleX(0.848);transform-origin:0 0">them suddenly like labor pains upon a woman with child</div><div class="a t" style="left:447px;top:332.6px;transform:scaleX(0.848);transform-origin:0 0">and they will not escape. <sup>4</sup> But you, brethren, are not in</div><div class="a t" style="left:447px;top:349.2px;transform:scaleX(0.848);transform-origin:0 0">darkness, that the day would overtake you like a thief; <sup>5</sup></div><div class="a t" style="left:447px;top:365.9px;transform:scaleX(0.848);transform-origin:0 0">for you are all sons of light and sons of day. We are not</div><div class="a t" style="left:447px;top:382.5px;transform:scaleX(0.848);transform-origin:0 0">of night nor of darkness; <sup>6</sup> so then let us not sleep as</div><div class="a t" style="left:447px;top:399.1px;transform:scaleX(0.848);transform-origin:0 0">others do, but let us be alert and sober. <sup>7</sup> For those who</div><div class="a t" style="left:447px;top:415.7px;transform:scaleX(0.848);transform-origin:0 0">sleep do their sleeping at night, and those who get</div><div class="a t" style="left:447px;top:432.3px;transform:scaleX(0.848);transform-origin:0 0">drunk get drunk at night. <sup>8</sup> But since we are of the day,</div><div class="a t" style="left:447px;top:449.0px;transform:scaleX(0.848);transform-origin:0 0">let us be sober, having put on the breastplate of faith</div><div class="a t" style="left:447px;top:465.6px;transform:scaleX(0.848);transform-origin:0 0">and love, and as a helmet, the hope of salvation. 9 For</div><div class="a t" style="left:447px;top:482.2px;transform:scaleX(0.848);transform-origin:0 0">God has not destined us for wrath, but for obtaining</div><div class="a t" style="left:447px;top:498.8px;transform:scaleX(0.848);transform-origin:0 0">salvation through our Lord Jesus Christ, 10 who died for</div><div class="a t" style="left:447px;top:515.4px;transform:scaleX(0.848);transform-origin:0 0">us, so that whether we are awake or asleep, we will live</div><div class="a t" style="left:447px;top:532.1px;transform:scaleX(0.848);transform-origin:0 0">together with Him. 11 Therefore [h]encourage one</div><div class="a t" style="left:447px;top:548.7px;transform:scaleX(0.848);transform-origin:0 0">another and build up one another just as you also are</div></div>
<style>sup{font-size:4px;vertical-align:top}</style>
<svg class="a" style="left:0px;top:0px;" width="900" height="778" viewBox="0 0 900 778"><line x1="309.5" y1="127" x2="309.5" y2="183" stroke="rgba(143,212,188,0.6)" stroke-width="1"/><line x1="309.5" y1="183" x2="309.5" y2="701" stroke="rgba(143,212,188,0.6)" stroke-width="1"/><line x1="309.5" y1="701" x2="309.5" y2="755" stroke="rgba(143,212,188,0.6)" stroke-width="1"/><line x1="336.5" y1="127" x2="336.5" y2="183" stroke="rgba(143,212,188,0.6)" stroke-width="1"/><line x1="336.5" y1="183" x2="336.5" y2="701" stroke="rgba(143,212,188,0.6)" stroke-width="1"/><line x1="336.5" y1="701" x2="336.5" y2="755" stroke="rgba(143,212,188,0.6)" stroke-width="1"/><line x1="364.5" y1="127" x2="364.5" y2="183" stroke="rgba(143,212,188,0.6)" stroke-width="1"/><line x1="364.5" y1="183" x2="364.5" y2="701" stroke="rgba(143,212,188,0.6)" stroke-width="1"/><line x1="364.5" y1="701" x2="364.5" y2="755" stroke="rgba(143,212,188,0.6)" stroke-width="1"/><line x1="392.5" y1="127" x2="392.5" y2="183" stroke="rgba(143,212,188,0.6)" stroke-width="1"/><line x1="392.5" y1="183" x2="392.5" y2="701" stroke="rgba(143,212,188,0.6)" stroke-width="1"/><line x1="392.5" y1="701" x2="392.5" y2="755" stroke="rgba(143,212,188,0.6)" stroke-width="1"/><line x1="419.5" y1="127" x2="419.5" y2="183" stroke="rgba(143,212,188,0.6)" stroke-width="1"/><line x1="419.5" y1="183" x2="419.5" y2="701" stroke="rgba(143,212,188,0.6)" stroke-width="1"/><line x1="419.5" y1="701" x2="419.5" y2="755" stroke="rgba(143,212,188,0.6)" stroke-width="1"/><line x1="447.5" y1="127" x2="447.5" y2="183" stroke="rgba(143,212,188,0.6)" stroke-width="1"/><line x1="447.5" y1="183" x2="447.5" y2="701" stroke="rgba(143,212,188,0.6)" stroke-width="1"/><line x1="447.5" y1="701" x2="447.5" y2="755" stroke="rgba(143,212,188,0.6)" stroke-width="1"/><line x1="475.5" y1="127" x2="475.5" y2="183" stroke="rgba(143,212,188,0.6)" stroke-width="1"/><line x1="475.5" y1="183" x2="475.5" y2="701" stroke="rgba(143,212,188,0.6)" stroke-width="1"/><line x1="475.5" y1="701" x2="475.5" y2="755" stroke="rgba(143,212,188,0.6)" stroke-width="1"/><line x1="502.5" y1="127" x2="502.5" y2="183" stroke="rgba(143,212,188,0.6)" stroke-width="1"/><line x1="502.5" y1="183" x2="502.5" y2="701" stroke="rgba(143,212,188,0.6)" stroke-width="1"/><line x1="502.5" y1="701" x2="502.5" y2="755" stroke="rgba(143,212,188,0.6)" stroke-width="1"/><line x1="530.5" y1="127" x2="530.5" y2="183" stroke="rgba(143,212,188,0.6)" stroke-width="1"/><line x1="530.5" y1="183" x2="530.5" y2="701" stroke="rgba(143,212,188,0.6)" stroke-width="1"/><line x1="530.5" y1="701" x2="530.5" y2="755" stroke="rgba(143,212,188,0.6)" stroke-width="1"/><line x1="557.5" y1="127" x2="557.5" y2="183" stroke="rgba(143,212,188,0.6)" stroke-width="1"/><line x1="557.5" y1="183" x2="557.5" y2="701" stroke="rgba(143,212,188,0.6)" stroke-width="1"/><line x1="557.5" y1="701" x2="557.5" y2="755" stroke="rgba(143,212,188,0.6)" stroke-width="1"/><line x1="585.5" y1="127" x2="585.5" y2="183" stroke="rgba(143,212,188,0.6)" stroke-width="1"/><line x1="585.5" y1="183" x2="585.5" y2="701" stroke="rgba(143,212,188,0.6)" stroke-width="1"/><line x1="585.5" y1="701" x2="585.5" y2="755" stroke="rgba(143,212,188,0.6)" stroke-width="1"/><line x1="613.5" y1="127" x2="613.5" y2="183" stroke="rgba(143,212,188,0.6)" stroke-width="1"/><line x1="613.5" y1="183" x2="613.5" y2="701" stroke="rgba(143,212,188,0.6)" stroke-width="1"/><line x1="613.5" y1="701" x2="613.5" y2="755" stroke="rgba(143,212,188,0.6)" stroke-width="1"/><line x1="640.5" y1="127" x2="640.5" y2="183" stroke="rgba(143,212,188,0.6)" stroke-width="1"/><line x1="640.5" y1="183" x2="640.5" y2="701" stroke="rgba(143,212,188,0.6)" stroke-width="1"/><line x1="640.5" y1="701" x2="640.5" y2="755" stroke="rgba(143,212,188,0.6)" stroke-width="1"/><line x1="78" y1="237.5" x2="309" y2="237.5" stroke="rgba(143,212,188,0.6)" stroke-width="1"/><line x1="309" y1="237.5" x2="641" y2="237.5" stroke="rgba(143,212,188,0.6)" stroke-width="1"/><line x1="641" y1="237.5" x2="872" y2="237.5" stroke="rgba(143,212,188,0.6)" stroke-width="1"/></svg>
<svg class="a" style="left:0px;top:0px;" width="52" height="778" viewBox="0 0 52 778"><defs><linearGradient id="tg" x1="0" y1="0" x2="0" y2="1"><stop offset="0" stop-color="#dedede"/><stop offset="1" stop-color="#a9a9a9"/></linearGradient><linearGradient id="gr" x1="0" y1="0" x2="1" y2="0.3"><stop offset="0" stop-color="#2c2c2c"/><stop offset="1" stop-color="#d0d0d0"/></linearGradient></defs><path d="M38 182 L43 177 L43 182Z" fill="#e0e0e0"/><path d="M38 218 L43 213 L43 218Z" fill="#e0e0e0"/><path d="M38 255 L43 250 L43 255Z" fill="#e0e0e0"/><path d="M38 291 L43 286 L43 291Z" fill="#e0e0e0"/><path d="M38 327 L43 322 L43 327Z" fill="#e0e0e0"/><path d="M38 366 L43 361 L43 366Z" fill="#e0e0e0"/><path d="M38 402 L43 397 L43 402Z" fill="#e0e0e0"/><path d="M38 438 L43 433 L43 438Z" fill="#e0e0e0"/><path d="M38 475 L43 470 L43 475Z" fill="#e0e0e0"/><path d="M38 511 L43 506 L43 511Z" fill="#e0e0e0"/><path d="M38 547 L43 542 L43 547Z" fill="#e0e0e0"/><path d="M38 583 L43 578 L43 583Z" fill="#e0e0e0"/><path d="M38 619 L43 614 L43 619Z" fill="#e0e0e0"/><path d="M38 657 L43 652 L43 657Z" fill="#e0e0e0"/><path d="M38 693 L43 688 L43 693Z" fill="#e0e0e0"/><path d="M38 729 L43 724 L43 729Z" fill="#e0e0e0"/><path d="M38 766 L43 761 L43 766Z" fill="#e0e0e0"/><path d="M15 122.7 L15 136.7 L19 133.1 L24.8 132.4Z" fill="url(#tg)"/><path d="M15 122.7 L24.8 132.4" stroke="#1e1e1e" stroke-width="0.9"/><path d="M32.1 128.2 L39.0 135.1 L32.1 142.0 L25.200000000000003 135.1Z" fill="#dcdcdc" stroke="#2a2a2a" stroke-width="0.7"/><rect x="28.900000000000002" y="131.9" width="2" height="2" fill="#1e1e1e"/><rect x="28.900000000000002" y="136.29999999999998" width="2" height="2" fill="#1e1e1e"/><rect x="33.300000000000004" y="131.9" width="2" height="2" fill="#1e1e1e"/><rect x="33.300000000000004" y="136.29999999999998" width="2" height="2" fill="#1e1e1e"/><rect x="17" y="159.5" width="17.5" height="16" fill="none" stroke="#e4e4e4" stroke-width="2" stroke-dasharray="3.5 2.2" stroke-dashoffset="1"/><ellipse cx="26.5" cy="201.5" rx="10.5" ry="6.3" transform="rotate(-12 26.5 201.5)" fill="none" stroke="#e0e0e0" stroke-width="1.6"/><path d="M18 206 c-3 1 -3 4 0 4.5 c2 0.5 3 2 2 4" fill="none" stroke="#e0e0e0" stroke-width="1.5"/><path d="M22 229 l1.8 5 4.5-2.5 -2 4.6 5 1.6 -5 1.7 2 4.6 -4.5 -2.5 -1.8 5 -1.8 -5 -4.5 2.5 2 -4.6 -5 -1.7 5 -1.6 -2 -4.6 4.5 2.5z" fill="url(#tg)"/><line x1="26" y1="241.5" x2="37.5" y2="252" stroke="#d8d8d8" stroke-width="2.6" stroke-linecap="round"/><path d="M20 266 v16 h16 M15 271 h16 v16" fill="none" stroke="url(#tg)" stroke-width="3"/><line x1="20" y1="282" x2="35" y2="267" stroke="#d0d0d0" stroke-width="1.2"/><path d="M17 321 l12 -12" stroke="#dcdcdc" stroke-width="4" stroke-linecap="round"/><path d="M17 321 l12 -12" stroke="#555" stroke-width="1.6" stroke-linecap="round"/><path d="M26 306 l5 5" stroke="#d6d6d6" stroke-width="4"/><path d="M30 307 l5 -5" stroke="#d0d0d0" stroke-width="5" stroke-linecap="round"/><path d="M13 360 a10.5 10.5 0 0 1 10 -17.5" fill="none" stroke="#e8e8e8" stroke-width="1.8" stroke-dasharray="1.3 1.7"/><g transform="rotate(-45 27 352.5)"><rect x="14" y="347.5" width="26" height="10" rx="4" fill="#b4b4b4" stroke="#2a2a2a" stroke-width="0.9"/><rect x="22" y="347.5" width="10" height="10" fill="#9a9a9a"/><rect x="16.5" y="349.4" width="1.2" height="1.2" fill="#555"/><rect x="16.5" y="351.9" width="1.2" height="1.2" fill="#555"/><rect x="16.5" y="354.4" width="1.2" height="1.2" fill="#555"/><rect x="19.5" y="349.4" width="1.2" height="1.2" fill="#555"/><rect x="19.5" y="351.9" width="1.2" height="1.2" fill="#555"/><rect x="19.5" y="354.4" width="1.2" height="1.2" fill="#555"/><rect x="35" y="349.4" width="1.2" height="1.2" fill="#555"/><rect x="35" y="351.9" width="1.2" height="1.2" fill="#555"/><rect x="35" y="354.4" width="1.2" height="1.2" fill="#555"/><rect x="38" y="349.4" width="1.2" height="1.2" fill="#555"/><rect x="38" y="351.9" width="1.2" height="1.2" fill="#555"/><rect x="38" y="354.4" width="1.2" height="1.2" fill="#555"/><rect x="24" y="349.4" width="1.2" height="1.2" fill="#444"/><rect x="24" y="351.9" width="1.2" height="1.2" fill="#444"/><rect x="24" y="354.4" width="1.2" height="1.2" fill="#444"/><rect x="27" y="349.4" width="1.2" height="1.2" fill="#444"/><rect x="27" y="351.9" width="1.2" height="1.2" fill="#444"/><rect x="27" y="354.4" width="1.2" height="1.2" fill="#444"/><rect x="30" y="349.4" width="1.2" height="1.2" fill="#444"/><rect x="30" y="351.9" width="1.2" height="1.2" fill="#444"/><rect x="30" y="354.4" width="1.2" height="1.2" fill="#444"/></g><line x1="25" y1="391" x2="38" y2="376.5" stroke="#d6d6d6" stroke-width="2.5" stroke-linecap="round"/><path d="M13.5 396 c3 -1 5 -5 9 -5 c3 0 4 3 2 5 c-2 2 -7 2.5 -11 0z" fill="#cfcfcf"/><circle cx="26" cy="416" r="3.6" fill="url(#tg)"/><rect x="24" y="418" width="4" height="7" fill="#cfcfcf"/><path d="M16 432.5 v-3.5 a2.5 2.5 0 0 1 2.5 -2.5 h15 a2.5 2.5 0 0 1 2.5 2.5 v3.5z" fill="url(#tg)"/><rect x="16.5" y="434" width="19" height="1.8" fill="#c8c8c8"/><path d="M20.5 455 a9 8 0 0 1 12 -2" fill="none" stroke="#d0d0d0" stroke-width="1.8"/><path d="M16 455.5 l7 -4 0 5.5z" fill="#d0d0d0"/><line x1="27" y1="466" x2="37" y2="453" stroke="#d6d6d6" stroke-width="2.3" stroke-linecap="round"/><path d="M15 468 c2 -1 4 -4 7 -4.5 c3 0 4 2.5 2.5 4 c-2 2 -6 2 -9.5 0.5z" fill="#cfcfcf"/><circle cx="34.5" cy="459" r="0.7" fill="#e0e0e0"/><circle cx="34" cy="462.5" r="0.7" fill="#e0e0e0"/><circle cx="32" cy="465.5" r="0.7" fill="#e0e0e0"/><circle cx="30" cy="467.5" r="0.7" fill="#e0e0e0"/><path d="M16 499 l2 -5 h9 l-2.5 6.5 v5 h-7 a2 2 0 0 1 -2 -2z" fill="#bdbdbd"/><path d="M18 494 l6 -7.5 h14 l-6 7.5z" fill="#d6d6d6"/><path d="M27 494 l11 -7.5 v5.5 l-11 8.5z" fill="#9a9a9a"/><path d="M24.5 500.5 l13.5 -8.5 v0.5 l-13.5 12z" fill="#8a8a8a"/><rect x="16" y="524" width="20.5" height="16.5" fill="url(#gr)" stroke="#d8d8d8" stroke-width="1.6"/><path d="M24.5 557 c-1 4 -7 9 -7 14 a7 7 0 0 0 14 0 c0 -5 -6 -10 -7 -14z" fill="url(#tg)"/><line x1="27" y1="605" x2="34.5" y2="612.5" stroke="#d0d0d0" stroke-width="2.2" stroke-linecap="round"/><circle cx="23.5" cy="601" r="6.2" fill="url(#tg)"/><path d="M15.5 655.5 c2 -7 5 -12 9 -15 l6 6 c-3 4 -8 7 -15 9z" fill="url(#tg)" stroke="#3a3a3a" stroke-width="0.6"/><line x1="15.5" y1="655.5" x2="23.5" y2="647.5" stroke="#3c3c3c" stroke-width="0.9"/><circle cx="24.5" cy="646.5" r="1.2" fill="#3c3c3c"/><path d="M27.5 637.5 l4 -4 6 6 -4 4z" fill="#d6d6d6"/><path d="M17 670.5 h18 v5.5 h-1 c-0.5 -2.5 -1 -3.5 -3 -3.5 h-3.8 v14.5 c0 0.8 0.6 1 2.2 1 v0.8 h-7.8 v-0.8 c1.6 0 2.2 -0.2 2.2 -1 v-14.5 h-3.8 c-2 0 -2.5 1 -3 3.5 h-1z" fill="url(#tg)"/><path d="M20.5 704 v19 l4.5 -4.5 3.5 8 3 -1.5 -3.5 -7.5 h6.5z" fill="url(#tg)" stroke="#2c2c2c" stroke-width="0.6"/><rect x="16.8" y="744.5" width="18.5" height="15" fill="url(#tg)" stroke="#dcdcdc" stroke-width="1.6"/><rect x="18" y="745.5" width="16" height="13" fill="#6a6a6a" opacity="0.6"/></svg>
<div class="a" style="left:898px;top:94px;width:53px;height:24px;background:#535353;border-top:1px solid #606060"></div>
<div class="a t" style="left:907.5px;top:99.5px;font-size:13.2px;font-weight:bold;color:#f0f0f0;text-shadow:0 -1px 0 #2a2a2a">Color</div>
<div class="a" style="left:951px;top:94px;width:78px;height:23px;background:#404040;border-left:1px solid #363636;border-top:1px solid #474747"></div>
<div class="a t" style="left:960px;top:99.5px;font-size:12.9px;font-weight:bold;color:#b5b5b5;text-shadow:0 -1px 0 #2a2a2a">Swatches</div>
<div class="a" style="left:1029px;top:94px;width:1px;height:23px;background:#363636"></div>
<svg class="a" style="left:1175px;top:101px;" width="20" height="12" viewBox="0 0 20 12"><path d="M0.5 3.5 h6.5 l-3.25 3.5z" fill="#e0e0e0"/><g fill="#d8d8d8"><rect x="8" y="0" width="11" height="1.6"/><rect x="8" y="3" width="11" height="1.6"/><rect x="8" y="6" width="11" height="1.6"/><rect x="8" y="9" width="11" height="1.6"/></g></svg>
<div class="a" style="left:920px;top:143px;width:27px;height:27px;background:#63c5bf;border:2px solid #f4f4f4;box-shadow:0 0 0 1px #2a2a2a"></div>
<div class="a" style="left:905px;top:128px;width:28px;height:28px;background:#adbc9f;border:2px solid #f4f4f4;box-shadow:0 0 0 1px #2a2a2a"></div>
<div class="a t" style="left:956.5px;top:133px;font-size:13px;font-weight:bold;color:#eeeeee;text-shadow:0 -1px 0 #2a2a2a">R</div>
<div class="a t" style="left:956.5px;top:165px;font-size:13px;font-weight:bold;color:#eeeeee;text-shadow:0 -1px 0 #2a2a2a">G</div>
<div class="a t" style="left:956.5px;top:197px;font-size:13px;font-weight:bold;color:#eeeeee;text-shadow:0 -1px 0 #2a2a2a">B</div>
<div class="a" style="left:974px;top:128px;width:132px;height:8px;background:linear-gradient(90deg,#1fc2a3,#f3b596);border:1px solid #858585;box-shadow:0 0 0 0.5px #444"></div>
<svg class="a" style="left:1055.5px;top:135px;" width="15" height="14" viewBox="0 0 15 14"><defs><linearGradient id="th" x1="0" y1="0" x2="0" y2="1"><stop offset="0" stop-color="#d8d8d8"/><stop offset="1" stop-color="#8a8a8a"/></linearGradient></defs><path d="M7.5 1 L14 7.5 V13 H1 V7.5Z" fill="url(#th)" stroke="#2c2c2c" stroke-width="1"/></svg>
<div class="a" style="left:1114px;top:127.5px;width:44px;height:23.5px;background:#3b3b3b;border:1px solid #363636;box-shadow:0 1px 0 #5f5f5f"></div>
<div class="a t" style="left:1120px;top:133px;font-size:14px;color:#f0f0f0">173</div>
<div class="a" style="left:974px;top:160px;width:132px;height:8px;background:linear-gradient(90deg,#b111b1,#a6f59f);border:1px solid #858585;box-shadow:0 0 0 0.5px #444"></div>
<svg class="a" style="left:1062.5px;top:167px;" width="15" height="14" viewBox="0 0 15 14"><defs><linearGradient id="th" x1="0" y1="0" x2="0" y2="1"><stop offset="0" stop-color="#d8d8d8"/><stop offset="1" stop-color="#8a8a8a"/></linearGradient></defs><path d="M7.5 1 L14 7.5 V13 H1 V7.5Z" fill="url(#th)" stroke="#2c2c2c" stroke-width="1"/></svg>
<div class="a" style="left:1114px;top:159.5px;width:44px;height:23.5px;background:#3b3b3b;border:1px solid #363636;box-shadow:0 1px 0 #5f5f5f"></div>
<div class="a t" style="left:1120px;top:165px;font-size:14px;color:#f0f0f0">188</div>
<div class="a" style="left:974px;top:192px;width:132px;height:8px;background:linear-gradient(90deg,#b5c410,#a5b6f8);border:1px solid #858585;box-shadow:0 0 0 0.5px #444"></div>
<svg class="a" style="left:1049.0px;top:199px;" width="15" height="14" viewBox="0 0 15 14"><defs><linearGradient id="th" x1="0" y1="0" x2="0" y2="1"><stop offset="0" stop-color="#d8d8d8"/><stop offset="1" stop-color="#8a8a8a"/></linearGradient></defs><path d="M7.5 1 L14 7.5 V13 H1 V7.5Z" fill="url(#th)" stroke="#2c2c2c" stroke-width="1"/></svg>
<div class="a" style="left:1114px;top:191.5px;width:44px;height:23.5px;background:#3b3b3b;border:1px solid #363636;box-shadow:0 1px 0 #5f5f5f"></div>
<div class="a t" style="left:1120px;top:197px;font-size:14px;color:#f0f0f0">159</div>
<div class="a" style="left:903.5px;top:224.5px;width:274px;height:22px;background:#000;border:1px solid #3a3a3a"></div>
<div class="a" style="left:904.5px;top:225.5px;width:262px;height:20px;background:linear-gradient(90deg,#ff2a2a 0%,#ffff00 17%,#00b040 33%,#00c0ff 50%,#0010a0 67%,#c000c0 83%,#ff0030 100%)"></div>
<div class="a" style="left:904.5px;top:225.5px;width:262px;height:20px;background:linear-gradient(rgba(255,255,255,.6),rgba(255,255,255,0) 50%,rgba(0,0,0,0) 50%,rgba(0,0,0,.9))"></div>
<div class="a" style="left:1166.5px;top:225.5px;width:10px;height:10px;background:#fff"></div>
<div class="a" style="left:1166.5px;top:235.5px;width:10px;height:10px;background:#000"></div>
<div class="a" style="left:897px;top:254px;width:61px;height:24px;background:#535353;border-top:1px solid #606060"></div>
<div class="a t" style="left:908px;top:259.5px;font-size:13px;font-weight:bold;color:#f0f0f0;text-shadow:0 -1px 0 #2a2a2a">Layers</div>
<div class="a" style="left:958px;top:254px;width:47px;height:23px;background:#404040;border-left:1px solid #363636;border-top:1px solid #474747"></div>
<div class="a t" style="left:967px;top:259.5px;font-size:13px;font-weight:bold;color:#b5b5b5;text-shadow:0 -1px 0 #2a2a2a">Chanr</div>
<div class="a" style="left:1005px;top:254px;width:44px;height:23px;background:#404040;border-left:1px solid #363636;border-top:1px solid #474747"></div>
<div class="a t" style="left:1014px;top:259.5px;font-size:13px;font-weight:bold;color:#b5b5b5;text-shadow:0 -1px 0 #2a2a2a">Paths</div>
<div class="a" style="left:1049px;top:254px;width:47px;height:23px;background:#404040;border-left:1px solid #363636;border-top:1px solid #474747"></div>
<div class="a t" style="left:1057px;top:259.5px;font-size:13px;font-weight:bold;color:#b5b5b5;text-shadow:0 -1px 0 #2a2a2a">Adjus</div>
<div class="a" style="left:1096px;top:254px;width:50px;height:23px;background:#404040;border-left:1px solid #363636;border-top:1px solid #474747"></div>
<div class="a t" style="left:1104px;top:259.5px;font-size:13px;font-weight:bold;color:#b5b5b5;text-shadow:0 -1px 0 #2a2a2a">Styles</div>
<div class="a" style="left:1005px;top:254px;width:9px;height:23px;background:transparent"></div>
<svg class="a" style="left:1175px;top:261px;" width="20" height="12" viewBox="0 0 20 12"><path d="M0.5 3.5 h6.5 l-3.25 3.5z" fill="#e0e0e0"/><g fill="#d8d8d8"><rect x="8" y="0" width="11" height="1.6"/><rect x="8" y="3" width="11" height="1.6"/><rect x="8" y="6" width="11" height="1.6"/><rect x="8" y="9" width="11" height="1.6"/></g></svg>
<div class="a" style="left:904px;top:285.5px;width:88px;height:23px;border:1px solid #222;border-radius:4px;background:linear-gradient(#6a6a6a,#4f4f4f);box-shadow:inset 0 1px 0 #777, 0 1px 0 #5c5c5c"></div>
<svg class="a" style="left:914px;top:289px;" width="14" height="16" viewBox="0 0 14 16"><circle cx="8.5" cy="6" r="4.6" fill="none" stroke="#e6e6e6" stroke-width="1.8"/><line x1="5.2" y1="9.3" x2="1.2" y2="13.5" stroke="#e6e6e6" stroke-width="2.2" stroke-linecap="round"/></svg>
<div class="a t s" style="left:932.5px;top:290px;font-size:13.5px;color:#eeeeee;text-shadow:0 -1px 0 #333">Kind</div>
<svg class="a" style="left:978px;top:290.5px;" width="9" height="13" viewBox="0 0 9 13"><path d="M0.5 5 L4.5 0.5 L8.5 5 Z M0.5 8 L4.5 12.5 L8.5 8 Z" fill="#e6e6e6"/></svg>
<svg class="a" style="left:0px;top:0px;" width="1200" height="778" viewBox="0 0 1200 778"><rect x="1008" y="289.5" width="18" height="15" fill="none" stroke="#cfcfcf" stroke-width="1.5"/><path d="M1010.5 302 l4 -5 3 3 2 -2 4 4z" fill="#cfcfcf"/><circle cx="1020" cy="294" r="1.5" fill="#cfcfcf"/><circle cx="1049.5" cy="297.5" r="6.8" fill="#cfcfcf"/><path d="M1053.8 293.2 a5.5 5.5 0 0 1 -7.8 7.8z" fill="#555"/><path d="M1075 289 h15 v4.5 h-0.8 c-0.5 -2 -1 -3 -2.5 -3 h-3.2 v12 c0 0.7 0.5 0.8 1.8 0.8 v0.7 h-6.6 v-0.7 c1.3 0 1.8 -0.1 1.8 -0.8 v-12 h-3.2 c-1.5 0 -2 1 -2.5 3 h-0.8z" fill="url(#tg)"/><rect x="1109.5" y="290.5" width="13" height="13" fill="none" stroke="#cfcfcf" stroke-width="1.3"/><rect x="1107.5" y="288.5" width="4" height="4" fill="#cfcfcf" stroke="#444" stroke-width="0.5"/><rect x="1120.5" y="288.5" width="4" height="4" fill="#cfcfcf" stroke="#444" stroke-width="0.5"/><rect x="1107.5" y="301.5" width="4" height="4" fill="#cfcfcf" stroke="#444" stroke-width="0.5"/><rect x="1120.5" y="301.5" width="4" height="4" fill="#cfcfcf" stroke="#444" stroke-width="0.5"/><path d="M1148 289 h6 l3.5 3.5 v11.5 h-9.5z" fill="none" stroke="#cfcfcf" stroke-width="1.3"/><rect x="1141" y="297" width="9" height="9" fill="#cfcfcf"/></svg>
<div class="a" style="left:1176px;top:286px;width:13px;height:23px;background:linear-gradient(#9a9a9a 0,#7a7a7a 48%,#353535 50%,#3c3c3c 100%);border:1px solid #2c2c2c;border-radius:2px"></div>
<div class="a" style="left:897px;top:316px;width:303px;height:1px;background:#3a3a3a;box-shadow:0 1px 0 #5e5e5e"></div>
<div class="a" style="left:904px;top:325px;width:159px;height:22px;border:1px solid #222;border-radius:4px;background:linear-gradient(#6a6a6a,#4f4f4f);box-shadow:inset 0 1px 0 #777, 0 1px 0 #5c5c5c"></div>
<div class="a t s" style="left:913px;top:330px;font-size:13.5px;color:#eeeeee;text-shadow:0 -1px 0 #333">Normal</div>
<svg class="a" style="left:1049px;top:329.5px;" width="9" height="13" viewBox="0 0 9 13"><path d="M0.5 5 L4.5 0.5 L8.5 5 Z M0.5 8 L4.5 12.5 L8.5 8 Z" fill="#e6e6e6"/></svg>
<div class="a t s" style="left:1068px;top:331px;font-size:13.5px;color:#eeeeee;text-shadow:0 -1px 0 #333">Opacity:</div>
<div class="a" style="left:1122px;top:325px;width:66px;height:22px;background:#393939;border:1px solid #2e2e2e;border-radius:3px;box-shadow:0 1px 0 #5e5e5e"></div>
<div class="a" style="left:1165px;top:325px;width:23px;height:22px;background:linear-gradient(#6e6e6e,#535353);border:1px solid #2e2e2e;border-radius:0 3px 3px 0"></div>
<svg class="a" style="left:1172px;top:333px;" width="10" height="6" viewBox="0 0 10 6"><path d="M0.5 0.5 H8.5 L4.5 5Z" fill="#eaeaea"/></svg>
<div class="a t" style="left:1129px;top:330px;font-size:14px;color:#f0f0f0">30%</div>
<div class="a" style="left:897px;top:354px;width:303px;height:1px;background:#3a3a3a;box-shadow:0 1px 0 #5e5e5e"></div>
<div class="a t s" style="left:905px;top:369.5px;font-size:13.5px;color:#eeeeee;text-shadow:0 -1px 0 #333">Lock:</div>
<svg class="a" style="left:0px;top:0px;" width="1200" height="778" viewBox="0 0 1200 778"><rect x="947.0" y="368.0" width="3.8" height="3.8" fill="#8c8c8c"/><rect x="947.0" y="371.7" width="3.8" height="3.8" fill="#6a6a6a"/><rect x="947.0" y="375.4" width="3.8" height="3.8" fill="#8c8c8c"/><rect x="947.0" y="379.1" width="3.8" height="3.8" fill="#6a6a6a"/><rect x="950.7" y="368.0" width="3.8" height="3.8" fill="#6a6a6a"/><rect x="950.7" y="371.7" width="3.8" height="3.8" fill="#8c8c8c"/><rect x="950.7" y="375.4" width="3.8" height="3.8" fill="#6a6a6a"/><rect x="950.7" y="379.1" width="3.8" height="3.8" fill="#8c8c8c"/><rect x="954.4" y="368.0" width="3.8" height="3.8" fill="#8c8c8c"/><rect x="954.4" y="371.7" width="3.8" height="3.8" fill="#6a6a6a"/><rect x="954.4" y="375.4" width="3.8" height="3.8" fill="#8c8c8c"/><rect x="954.4" y="379.1" width="3.8" height="3.8" fill="#6a6a6a"/><rect x="958.1" y="368.0" width="3.8" height="3.8" fill="#6a6a6a"/><rect x="958.1" y="371.7" width="3.8" height="3.8" fill="#8c8c8c"/><rect x="958.1" y="375.4" width="3.8" height="3.8" fill="#6a6a6a"/><rect x="958.1" y="379.1" width="3.8" height="3.8" fill="#8c8c8c"/><line x1="985" y1="378" x2="996" y2="366.5" stroke="#9c9c9c" stroke-width="2.3" stroke-linecap="round"/><path d="M974 383 c2.5 -1 4 -4.5 7.5 -4.5 c2.5 0 3.5 2.5 2 4 c-2 2 -6 2 -9.5 0.5z" fill="#9c9c9c"/><path d="M1015 366 l3.3 3.4 h-2.1 v3.6 h3.6 v-2.1 l3.4 3.3 -3.4 3.3 v-2.1 h-3.6 v3.6 h2.1 l-3.3 3.4 -3.3 -3.4 h2.1 v-3.6 h-3.6 v2.1 l-3.4 -3.3 3.4 -3.3 v2.1 h3.6 v-3.6 h-2.1z" fill="#555" stroke="#e0e0e0" stroke-width="1.3"/><path d="M1042 374 v-3 a4.5 4.5 0 0 1 9 0 v3" fill="none" stroke="#cfcfcf" stroke-width="2"/><rect x="1039.5" y="373.5" width="14" height="11" rx="1.5" fill="url(#tg)"/><rect x="1045.8" y="377.5" width="1.6" height="3.5" fill="#555"/></svg>
<div class="a t s" style="left:1097px;top:369.5px;font-size:13.5px;color:#eeeeee;text-shadow:0 -1px 0 #333">Fill:</div>
<div class="a" style="left:1122px;top:364.5px;width:66px;height:22px;background:#393939;border:1px solid #2e2e2e;border-radius:3px;box-shadow:0 1px 0 #5e5e5e"></div>
<div class="a" style="left:1165px;top:364.5px;width:23px;height:22px;background:linear-gradient(#6e6e6e,#535353);border:1px solid #2e2e2e;border-radius:0 3px 3px 0"></div>
<svg class="a" style="left:1172px;top:372.5px;" width="10" height="6" viewBox="0 0 10 6"><path d="M0.5 0.5 H8.5 L4.5 5Z" fill="#eaeaea"/></svg>
<div class="a t" style="left:1129px;top:369.5px;font-size:14px;color:#f0f0f0">0%</div>
<div class="a" style="left:897px;top:395px;width:303px;height:1px;background:#3a3a3a"></div>
<div class="a" style="left:897px;top:396px;width:283px;height:325px;background:#535353"></div>
<div class="a" style="left:897px;top:449px;width:283px;height:1.5px;background:#3a3a3a"></div>
<div class="a" style="left:940px;top:396px;width:1px;height:54px;background:#3a3a3a"></div>
<div class="a" style="left:910px;top:415px;width:17px;height:16px;border:1px solid #3a3a3a;background:#4e4e4e;box-shadow:0 1px 0 #5e5e5e"></div>
<div class="a" style="left:945.5px;top:401.5px;width:31px;height:44px;background:#f4f4f4;border:1.5px solid #1e1e1e"></div>
<div class="a t s" style="left:987px;top:419px;font-size:13px;letter-spacing:0.2px;color:#f4f4f4;text-shadow:0 -1px 0 #333">paper_fibers copy 5</div>
<div class="a" style="left:897px;top:503px;width:283px;height:1.5px;background:#3a3a3a"></div>
<div class="a" style="left:940px;top:450px;width:1px;height:54px;background:#3a3a3a"></div>
<svg class="a" style="left:909px;top:469.5px;" width="20" height="14" viewBox="0 0 20 14"><path d="M1.2 7.5 c2.5 -5 6 -6.8 8.8 -6.8 c2.8 0 6.3 1.8 8.8 6.8 c-2.5 4.2 -6 5.8 -8.8 5.8 c-2.8 0 -6.3 -1.6 -8.8 -5.8z" fill="#d4d4d4"/><path d="M1.2 7.5 c2.5 -5 6 -6.8 8.8 -6.8 c2.8 0 6.3 1.8 8.8 6.8" fill="none" stroke="#2e2e2e" stroke-width="1"/><circle cx="10" cy="6.8" r="3.9" fill="#2c2c2c"/><circle cx="11.4" cy="5.3" r="1.2" fill="#e8e8e8"/></svg>
<svg class="a" style="left:956px;top:465px;" width="24" height="24" viewBox="0 0 24 24"><path d="M1 1.2 h22 v6.3 h-1.2 c-0.8 -2.2 -1.8 -3 -3.6 -3 h-3.4 v15.2 c0 0.9 0.5 1.1 2.8 1.1 v2.4 h-11.2 v-2.4 c2.3 0 2.8 -0.2 2.8 -1.1 v-15.2 h-3.4 c-1.8 0 -2.8 0.8 -3.6 3 h-1.2z" fill="url(#tg)"/><path d="M1 1.2 h22" stroke="#222" stroke-width="1.2"/></svg>
<div class="a t s" style="left:1000px;top:473px;font-size:13px;letter-spacing:0.42px;color:#f4f4f4;text-shadow:0 -1px 0 #333">Now as to the times and ...</div>
<div class="a" style="left:897px;top:557px;width:283px;height:1.5px;background:#3a3a3a"></div>
<div class="a" style="left:940px;top:504px;width:1px;height:54px;background:#3a3a3a"></div>
<svg class="a" style="left:909px;top:523.5px;" width="20" height="14" viewBox="0 0 20 14"><path d="M1.2 7.5 c2.5 -5 6 -6.8 8.8 -6.8 c2.8 0 6.3 1.8 8.8 6.8 c-2.5 4.2 -6 5.8 -8.8 5.8 c-2.8 0 -6.3 -1.6 -8.8 -5.8z" fill="#d4d4d4"/><path d="M1.2 7.5 c2.5 -5 6 -6.8 8.8 -6.8 c2.8 0 6.3 1.8 8.8 6.8" fill="none" stroke="#2e2e2e" stroke-width="1"/><circle cx="10" cy="6.8" r="3.9" fill="#2c2c2c"/><circle cx="11.4" cy="5.3" r="1.2" fill="#e8e8e8"/></svg>
<svg class="a" style="left:956px;top:519px;" width="24" height="24" viewBox="0 0 24 24"><path d="M1 1.2 h22 v6.3 h-1.2 c-0.8 -2.2 -1.8 -3 -3.6 -3 h-3.4 v15.2 c0 0.9 0.5 1.1 2.8 1.1 v2.4 h-11.2 v-2.4 c2.3 0 2.8 -0.2 2.8 -1.1 v-15.2 h-3.4 c-1.8 0 -2.8 0.8 -3.6 3 h-1.2z" fill="url(#tg)"/><path d="M1 1.2 h22" stroke="#222" stroke-width="1.2"/></svg>
<div class="a t s" style="left:1000px;top:527px;font-size:13px;letter-spacing:0.42px;color:#f4f4f4;text-shadow:0 -1px 0 #333">5</div>
<div class="a" style="left:897px;top:611px;width:283px;height:1.5px;background:#3a3a3a"></div>
<div class="a" style="left:940px;top:558px;width:1px;height:54px;background:#3a3a3a"></div>
<svg class="a" style="left:909px;top:577.5px;" width="20" height="14" viewBox="0 0 20 14"><path d="M1.2 7.5 c2.5 -5 6 -6.8 8.8 -6.8 c2.8 0 6.3 1.8 8.8 6.8 c-2.5 4.2 -6 5.8 -8.8 5.8 c-2.8 0 -6.3 -1.6 -8.8 -5.8z" fill="#d4d4d4"/><path d="M1.2 7.5 c2.5 -5 6 -6.8 8.8 -6.8 c2.8 0 6.3 1.8 8.8 6.8" fill="none" stroke="#2e2e2e" stroke-width="1"/><circle cx="10" cy="6.8" r="3.9" fill="#2c2c2c"/><circle cx="11.4" cy="5.3" r="1.2" fill="#e8e8e8"/></svg>
<div class="a" style="left:945.5px;top:563.5px;width:31px;height:44px;border:1.5px solid #1e1e1e;background-color:#fff;background-image:linear-gradient(45deg,#d8d8d8 25%,transparent 25%,transparent 75%,#d8d8d8 75%),linear-gradient(45deg,#d8d8d8 25%,transparent 25%,transparent 75%,#d8d8d8 75%);background-size:6px 6px;background-position:0 0,3px 3px"></div>
<div class="a t s" style="left:987px;top:581px;font-size:13px;letter-spacing:0.1px;color:#f4f4f4;text-shadow:0 -1px 0 #333">Cog</div>
<div class="a t" style="left:1142px;top:577px;font-size:18px;font-style:italic;font-family:'Liberation Serif',serif;color:#cacaca"><span style="display:inline-block;transform:scaleX(1.15);transform-origin:0 0">fx</span></div>
<div class="a" style="left:1164px;top:558px;width:15px;height:53px;background:linear-gradient(#a6a6a6,#7a7a7a 45%,#5e5e5e)"></div>
<svg class="a" style="left:1166px;top:583px;" width="10" height="6" viewBox="0 0 10 6"><path d="M0.5 0.5 H9.5 L5 5.5Z" fill="#2a2a2a"/></svg>
<div class="a" style="left:897px;top:665px;width:283px;height:1.5px;background:#3a3a3a"></div>
<div class="a" style="left:940px;top:612px;width:1px;height:54px;background:#3a3a3a"></div>
<div class="a" style="left:941px;top:612px;width:238px;height:53px;background:#687a94"></div>
<svg class="a" style="left:909px;top:631.5px;" width="20" height="14" viewBox="0 0 20 14"><path d="M1.2 7.5 c2.5 -5 6 -6.8 8.8 -6.8 c2.8 0 6.3 1.8 8.8 6.8 c-2.5 4.2 -6 5.8 -8.8 5.8 c-2.8 0 -6.3 -1.6 -8.8 -5.8z" fill="#d4d4d4"/><path d="M1.2 7.5 c2.5 -5 6 -6.8 8.8 -6.8 c2.8 0 6.3 1.8 8.8 6.8" fill="none" stroke="#2e2e2e" stroke-width="1"/><circle cx="10" cy="6.8" r="3.9" fill="#2c2c2c"/><circle cx="11.4" cy="5.3" r="1.2" fill="#e8e8e8"/></svg>
<div class="a t" style="left:1142px;top:631px;font-size:18px;font-style:italic;font-family:'Liberation Serif',serif;color:#cacaca"><span style="display:inline-block;transform:scaleX(1.15);transform-origin:0 0">fx</span></div>
<div class="a" style="left:1164px;top:612px;width:15px;height:53px;background:linear-gradient(#a6a6a6,#7a7a7a 45%,#5e5e5e)"></div>
<svg class="a" style="left:1166px;top:637px;" width="10" height="6" viewBox="0 0 10 6"><path d="M0.5 0.5 H9.5 L5 5.5Z" fill="#2a2a2a"/></svg>
<svg class="a" style="left:941px;top:624px;" width="30" height="30" viewBox="0 0 30 30"><path d="M1.5 7 v-5.5 h5.5 M23 1.5 h5.5 v5.5 M28.5 23 v5.5 h-5.5 M7 28.5 h-5.5 v-5.5" fill="none" stroke="#f4f4f4" stroke-width="1.6"/><path d="M4.8 26 V5 H26" fill="none" stroke="#111" stroke-width="4"/><path d="M4.8 25 V5 H25.5" fill="none" stroke="#e8ecef" stroke-width="0.9"/><rect x="11" y="11" width="11.5" height="11" fill="#6a7c92" stroke="#d0d4da" stroke-width="1.2"/><g fill="#d0d4da" stroke="#333" stroke-width="0.4"><circle cx="11" cy="11" r="1.5"/><circle cx="22.5" cy="11" r="1.5"/><circle cx="11" cy="22" r="1.5"/><circle cx="22.5" cy="22" r="1.5"/></g></svg>
<div class="a t s" style="left:978.5px;top:635px;font-size:13px;letter-spacing:0.05px;color:#f6f6f6;text-shadow:0 -1px 0 #3a4a5a">Rounded Rectangle 1</div>
<div class="a" style="left:897px;top:719px;width:283px;height:1.5px;background:#3a3a3a"></div>
<div class="a" style="left:940px;top:666px;width:1px;height:54px;background:#3a3a3a"></div>
<svg class="a" style="left:909px;top:685.5px;" width="20" height="14" viewBox="0 0 20 14"><path d="M1.2 7.5 c2.5 -5 6 -6.8 8.8 -6.8 c2.8 0 6.3 1.8 8.8 6.8 c-2.5 4.2 -6 5.8 -8.8 5.8 c-2.8 0 -6.3 -1.6 -8.8 -5.8z" fill="#d4d4d4"/><path d="M1.2 7.5 c2.5 -5 6 -6.8 8.8 -6.8 c2.8 0 6.3 1.8 8.8 6.8" fill="none" stroke="#2e2e2e" stroke-width="1"/><circle cx="10" cy="6.8" r="3.9" fill="#2c2c2c"/><circle cx="11.4" cy="5.3" r="1.2" fill="#e8e8e8"/></svg>
<svg class="a" style="left:956px;top:681px;" width="24" height="24" viewBox="0 0 24 24"><path d="M1 1.2 h22 v6.3 h-1.2 c-0.8 -2.2 -1.8 -3 -3.6 -3 h-3.4 v15.2 c0 0.9 0.5 1.1 2.8 1.1 v2.4 h-11.2 v-2.4 c2.3 0 2.8 -0.2 2.8 -1.1 v-15.2 h-3.4 c-1.8 0 -2.8 0.8 -3.6 3 h-1.2z" fill="url(#tg)"/><path d="M1 1.2 h22" stroke="#222" stroke-width="1.2"/></svg>
<div class="a t s" style="left:999.5px;top:689px;font-size:13px;letter-spacing:0.22px;color:#f4f4f4;text-shadow:0 -1px 0 #333">I Thessalonians</div>
<div class="a" style="left:1179px;top:396px;width:21px;height:325px;background:#3c3c3c;border-left:1px solid #363636;box-shadow:inset -2px 0 0 #555"></div>
<div class="a" style="left:1184px;top:400.5px;width:11.5px;height:209px;background:linear-gradient(90deg,#9a9a9a,#8a8a8a 40%,#7e7e7e);border-radius:6px;border:1px solid #303030"></div>
<div class="a" style="left:897px;top:720px;width:303px;height:4px;background:#3a3a3a"></div>
<div class="a" style="left:897px;top:724px;width:303px;height:26px;background:#535353"></div>
<svg class="a" style="left:0px;top:0px;" width="1200" height="778" viewBox="0 0 1200 778"><rect x="919" y="733.5" width="10" height="7" rx="3.5" fill="none" stroke="#c6c6c6" stroke-width="1.8"/><rect x="927" y="733.5" width="10" height="7" rx="3.5" fill="none" stroke="#c6c6c6" stroke-width="1.8"/><path d="M997 731 h17 v14 h-17z" fill="#c8c8c8"/><circle cx="1005.5" cy="738" r="3.3" fill="#4a4a4a"/><circle cx="1041" cy="737.5" r="6.5" fill="#c8c8c8"/><path d="M1045.3 733.2 a5.3 5.3 0 0 1 -7.6 7.6z" fill="#555"/><path d="M1052 744 h4 l-2 2z" fill="#e0e0e0"/><path d="M1069 731 h6 l1.5 2 h10.5 v12.5 h-18z" fill="#c6c6c6"/><path d="M1108.5 730.5 h14 v15 h-9.5 l-4.5 -4.5z" fill="#c8c8c8"/><path d="M1108.5 741 h5 v4.5z" fill="#2e2e2e"/><rect x="1143" y="731.5" width="17" height="2" fill="#c6c6c6"/><rect x="1148" y="729.5" width="7" height="3" fill="none" stroke="#c6c6c6" stroke-width="1"/><path d="M1145 735 h13 l-1 11 h-11z" fill="none" stroke="#c6c6c6" stroke-width="1.5"/><line x1="1149.3" y1="737" x2="1149.3" y2="744" stroke="#c6c6c6" stroke-width="1"/><line x1="1153.7" y1="737" x2="1153.7" y2="744" stroke="#c6c6c6" stroke-width="1"/></svg>
<div class="a t" style="left:957px;top:729px;font-size:18px;font-style:italic;font-family:'Liberation Serif',serif;color:#c6c6c6">fx</div>
<svg class="a" style="left:975px;top:742px;" width="6" height="4" viewBox="0 0 6 4"><path d="M0 0 h5 l-2.5 3z" fill="#e0e0e0"/></svg>
<div class="a" style="left:897px;top:750px;width:303px;height:2px;background:#2d2d2d"></div>
<div class="a" style="left:897px;top:752px;width:82px;height:26px;background:#535353;border-top:1px solid #606060"></div>
<div class="a t" style="left:908px;top:757.5px;font-size:13.3px;font-weight:bold;color:#f0f0f0;text-shadow:0 -1px 0 #2a2a2a">Character</div>
<div class="a" style="left:979px;top:752px;width:83px;height:25px;background:#404040;border-left:1px solid #363636;border-top:1px solid #474747"></div>
<div class="a t" style="left:988px;top:757.5px;font-size:13.2px;font-weight:bold;color:#b5b5b5;text-shadow:0 -1px 0 #2a2a2a">Paragraph</div>
<div class="a" style="left:1062px;top:752px;width:1px;height:26px;background:#363636"></div>
<svg class="a" style="left:1175px;top:760px;" width="20" height="12" viewBox="0 0 20 12"><path d="M0.5 3.5 h6.5 l-3.25 3.5z" fill="#e0e0e0"/><g fill="#d8d8d8"><rect x="8" y="0" width="11" height="1.6"/><rect x="8" y="3" width="11" height="1.6"/><rect x="8" y="6" width="11" height="1.6"/><rect x="8" y="9" width="11" height="1.6"/></g></svg>
<div class="a" style="left:895px;top:78px;width:2px;height:700px;background:#2d2d2d"></div>
</body></html>
